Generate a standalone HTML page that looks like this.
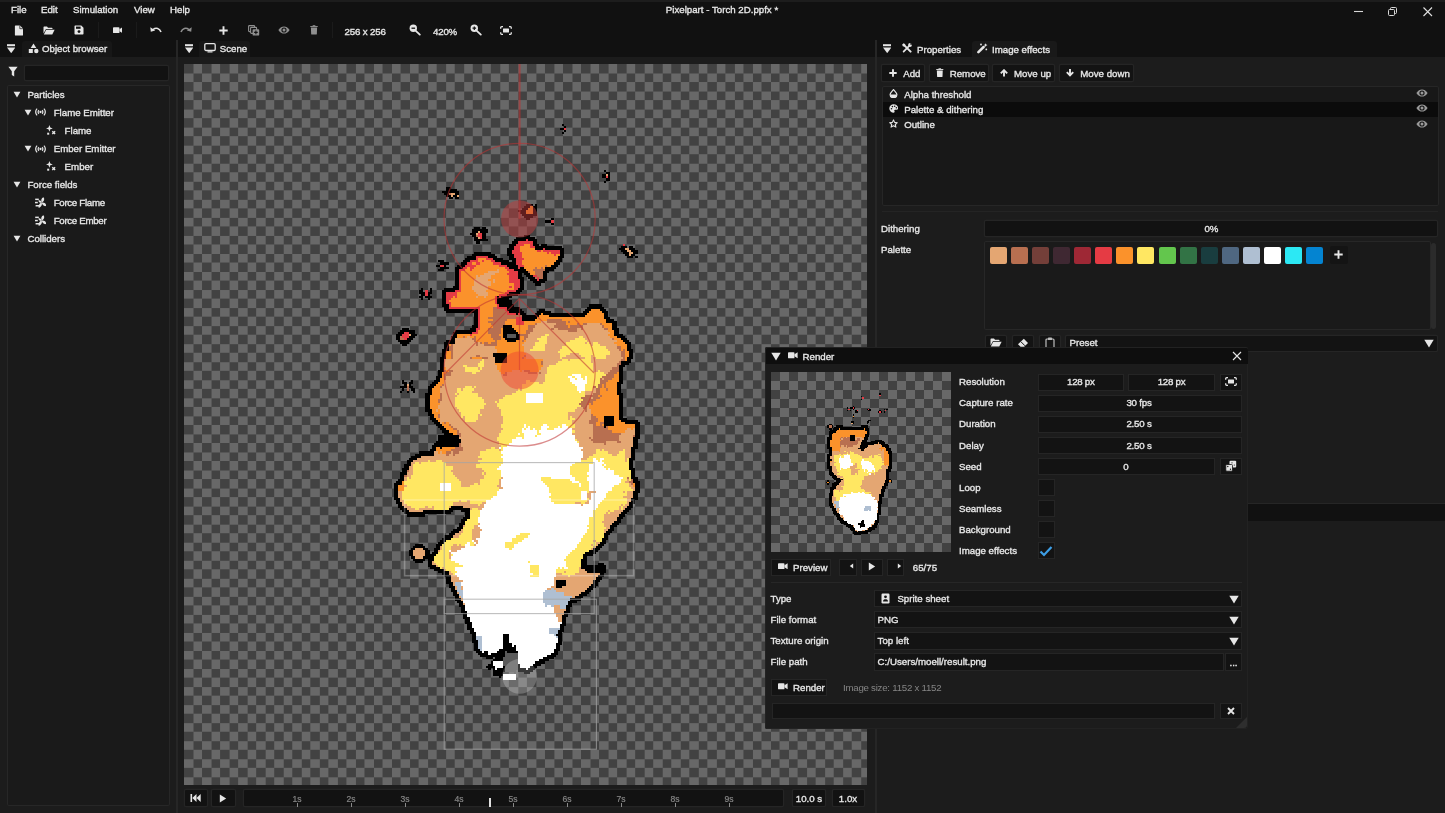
<!DOCTYPE html><html lang="en"><head><meta charset="utf-8"><title>Pixelpart - Torch 2D.ppfx *</title><style>
*{margin:0;padding:0;box-sizing:border-box}
html,body{width:1445px;height:813px;overflow:hidden;background:#1c1c1c}
body{position:relative;font-family:"Liberation Sans",sans-serif;font-size:9.7px;color:#e6e6e6}
div,span,svg{position:absolute}
.t{white-space:nowrap;line-height:14px;height:14px;-webkit-text-stroke:0.35px currentColor;letter-spacing:0}
.chk{background-color:#424242;background-image:conic-gradient(#686868 25%,transparent 0 50%,#686868 0 75%,transparent 0);background-size:18.06px 18.06px}
</style></head><body><div id="app" style="left:0;top:0;width:1445px;height:813px;will-change:transform">
<div style="left:0px;top:0px;width:1445px;height:57px;background:#111111;"></div>
<div style="left:0px;top:0px;width:1445px;height:2px;background:#1d1d1d;"></div>
<span class="t" style="top:2.5999999999999996px;left:11px;">File</span>
<span class="t" style="top:2.5999999999999996px;left:41px;">Edit</span>
<span class="t" style="top:2.5999999999999996px;left:73px;">Simulation</span>
<span class="t" style="top:2.5999999999999996px;left:134px;">View</span>
<span class="t" style="top:2.5999999999999996px;left:170px;">Help</span>
<span class="t" style="top:2.5999999999999996px;left:572px;width:300px;text-align:center;">Pixelpart - Torch 2D.ppfx *</span>
<svg style="left:1352px;top:6px" width="14" height="12" viewBox="0 0 14 12"><path d="M2 5.5H11" stroke="#d8d8d8" stroke-width="1.1" fill="none"/></svg><svg style="left:1386px;top:5px" width="14" height="14" viewBox="0 0 14 14"><rect x="2.5" y="4.5" width="6" height="6" rx="1" stroke="#d8d8d8" fill="none"/><path d="M4.5 4.5V3.5a1 1 0 0 1 1-1H9.5a1 1 0 0 1 1 1V7.5a1 1 0 0 1-1 1H8.5" stroke="#d8d8d8" fill="none"/></svg><svg style="left:1421px;top:5px" width="14" height="14" viewBox="0 0 14 14"><path d="M2.5 2.5L11 11M11 2.5L2.5 11" stroke="#e0e0e0" stroke-width="1.1" fill="none"/></svg>
<svg style="left:14px;top:25px" width="10" height="11" viewBox="0 0 10 11"><path d="M1.5 0.5H6L9 3.5V10a.6.6 0 0 1-.6.6H1.5a.6.6 0 0 1-.6-.6V1.1a.6.6 0 0 1 .6-.6Z" fill="#e6e6e6"/><path d="M5.8 0.5V3.7H9" fill="none" stroke="#111" stroke-width=".7"/></svg><svg style="left:43px;top:26px" width="12" height="9" viewBox="0 0 12 9"><path d="M0.5 7.5V1.2a.7.7 0 0 1 .7-.7H4l1 1.2H8.8a.7.7 0 0 1 .7.7V3H3L.5 7.5Z" fill="#e6e6e6"/><path d="M3.2 3.8H11.6L9.3 8.5H.8Z" fill="#e6e6e6"/></svg><svg style="left:74px;top:25px" width="10" height="10" viewBox="0 0 10 10"><path d="M1.2 .5H7.3L9.5 2.7V8.8a.7.7 0 0 1-.7.7H1.2a.7.7 0 0 1-.7-.7V1.2a.7.7 0 0 1 .7-.7Z" fill="#e6e6e6"/><rect x="2" y="1.6" width="4.6" height="2.2" fill="#111"/><circle cx="5" cy="6.6" r="1.4" fill="#111"/></svg><div style="left:98px;top:22px;width:1px;height:16px;background:#1b1b1b"></div><svg style="left:112.8px;top:26.8px" width="9.6" height="6.4" viewBox="0 0 11 7"><rect x="0" y="0" width="7.400" height="7" rx="1" fill="#e6e6e6"/><path d="M7.400 2.300L11 0V7L7.400 4.700Z" fill="#e6e6e6"/></svg><div style="left:136px;top:22px;width:1px;height:16px;background:#1b1b1b"></div><svg style="left:150px;top:26px" width="12" height="8" viewBox="0 0 12 8"><g ><path d="M3 3.6C6 1.2 9.6 2.2 11 6" fill="none" stroke="#e6e6e6" stroke-width="1.6"/><path d="M.3 1.2L.8 5.8L5.2 4.6Z" fill="#e6e6e6"/></g></svg><svg style="left:180px;top:26px" width="12" height="8" viewBox="0 0 12 8"><g transform="translate(12,0) scale(-1,1)"><path d="M3 3.6C6 1.2 9.6 2.2 11 6" fill="none" stroke="#8f8f8f" stroke-width="1.6"/><path d="M.3 1.2L.8 5.8L5.2 4.6Z" fill="#8f8f8f"/></g></svg><svg style="left:219px;top:26px" width="9" height="9" viewBox="0 0 9 9"><path d="M4.5 .3V8.7M.3 4.5H8.7" stroke="#e6e6e6" stroke-width="1.9" fill="none"/></svg><svg style="left:248px;top:25px" width="12" height="11" viewBox="0 0 12 11"><rect x=".6" y=".6" width="6" height="6" rx=".8" fill="none" stroke="#8f8f8f" stroke-width="1.1"/><rect x="2.6" y="2.4" width="6" height="6" rx=".8" fill="#111" stroke="#8f8f8f" stroke-width="1.1"/><rect x="4.6" y="4.2" width="6.6" height="6.4" rx=".9" fill="#8f8f8f"/><path d="M7.9 5.6V9.2M6.1 7.4H9.7" stroke="#111" stroke-width="1.1"/></svg><svg style="left:278px;top:26px" width="12" height="8" viewBox="0 0 12 8"><path d="M.4 4C2 1.3 4 .4 6 .4S10 1.3 11.6 4C10 6.7 8 7.6 6 7.6S2 6.7 .4 4Z" fill="#8f8f8f"/><circle cx="6" cy="4" r="2.6" fill="#151515"/><circle cx="6" cy="4" r="1.5" fill="#8f8f8f"/></svg><svg style="left:310px;top:25px" width="8" height="9.8" viewBox="0 0 9 11"><path d="M.3 1.100H8.700V2.200H.3Z" fill="#8f8f8f"/><path d="M3 .2H6V1.300H3Z" fill="#8f8f8f"/><path d="M1 2.800H8L7.700 10a.7.7 0 0 1-.7.600H2a.7.7 0 0 1-.7-.600Z" fill="#8f8f8f"/></svg><div style="left:332px;top:22px;width:1px;height:16px;background:#1b1b1b"></div><svg style="left:409px;top:24px" width="12" height="12" viewBox="0 0 12 12"><circle cx="4.300" cy="4.200" r="3.700" fill="#e6e6e6"/><path d="M2.500 4.200H6.100" stroke="#111" stroke-width="1.300"/><path d="M6.800 6.800L10.800 10.600" stroke="#e6e6e6" stroke-width="1.800" stroke-linecap="round"/></svg><svg style="left:470px;top:24px" width="12" height="12" viewBox="0 0 12 12"><circle cx="4.300" cy="4.200" r="3.700" fill="#e6e6e6"/><path d="M2.500 4.200H6.100M4.300 2.400V6" stroke="#111" stroke-width="1.200"/><path d="M6.800 6.800L10.800 10.600" stroke="#e6e6e6" stroke-width="1.800" stroke-linecap="round"/></svg><svg style="left:500px;top:26px" width="12" height="9" viewBox="0 0 12 9"><path d="M.7 2.8V1.7a1 1 0 0 1 1-1H3M9 .7h1.3a1 1 0 0 1 1 1V2.8M11.3 6.2V7.3a1 1 0 0 1-1 1H9M3 8.3H1.7a1 1 0 0 1-1-1V6.2" fill="none" stroke="#e6e6e6" stroke-width="1.3"/><rect x="3" y="2.6" width="6" height="3.8" rx=".5" fill="#e6e6e6"/></svg>
<span class="t" style="top:24.6px;left:344.5px;letter-spacing:-.15px;">256 x 256</span>
<span class="t" style="top:24.6px;left:433px;letter-spacing:-.2px;">420%</span>
<div style="left:22px;top:41px;width:90px;height:16px;background:#171717;border-radius:3px 3px 0 0;"></div>
<svg style="left:7px;top:43.8px" width="8.4" height="9.4" viewBox="0 0 8.4 9.4"><rect x="0" y=".2" width="8.4" height="2" fill="#e6e6e6"/><path d="M0 3.600H8.400L4.200 9.200Z" fill="#e6e6e6"/></svg>
<svg style="left:28px;top:43px" width="11" height="11" viewBox="0 0 11 11"><path d="M5.5 .5L8.3 5H2.7Z" fill="#e6e6e6"/><rect x=".8" y="6" width="4" height="4" fill="#e6e6e6"/><circle cx="8.3" cy="8" r="2.2" fill="#e6e6e6"/></svg>
<span class="t" style="top:42.4px;left:42px;">Object browser</span>
<div style="left:198.5px;top:41px;width:51.5px;height:16px;background:#171717;border-radius:3px 3px 0 0;"></div>
<svg style="left:184.9px;top:43.8px" width="8.4" height="9.4" viewBox="0 0 8.4 9.4"><rect x="0" y=".2" width="8.4" height="2" fill="#e6e6e6"/><path d="M0 3.600H8.400L4.200 9.200Z" fill="#e6e6e6"/></svg>
<svg style="left:204px;top:43.2px" width="12" height="10" viewBox="0 0 12 10"><rect x=".8" y=".7" width="10.4" height="6.8" rx="1.2" fill="none" stroke="#e6e6e6" stroke-width="1.3"/><rect x="3.5" y="8.3" width="5" height="1.2" fill="#e6e6e6"/></svg>
<span class="t" style="top:42.3px;left:219.7px;">Scene</span>
<div style="left:972px;top:41px;width:84.5px;height:16px;background:#191919;border-radius:3px 3px 0 0;"></div>
<svg style="left:882.5px;top:43.8px" width="8.4" height="9.4" viewBox="0 0 8.4 9.4"><rect x="0" y=".2" width="8.4" height="2" fill="#e6e6e6"/><path d="M0 3.600H8.400L4.200 9.200Z" fill="#e6e6e6"/></svg>
<svg style="left:902.3px;top:43.3px" width="10" height="10" viewBox="0 0 10 10"><path d="M1.600 1.600L8.600 8.600" stroke="#e6e6e6" stroke-width="2" stroke-linecap="round"/><path d="M8.200 1.800L1.600 8.600" stroke="#e6e6e6" stroke-width="1.700" stroke-linecap="round"/><circle cx="8" cy="2" r="1.900" fill="#e6e6e6"/><circle cx="9.100" cy=".9" r=".9" fill="#111"/><circle cx="1.900" cy="1.900" r="1.500" fill="#e6e6e6"/></svg>
<span class="t" style="top:42.6px;left:917px;">Properties</span>
<svg style="left:977.3px;top:43.3px" width="10.5" height="10.5" viewBox="0 0 10.5 10.5"><path d="M1.400 9.200L6.600 4" stroke="#e6e6e6" stroke-width="2.500" stroke-linecap="round"/><path d="M8.600 .2l.6 1.300 1.300.6-1.300.6-.6 1.300-.6-1.300-1.300-.6 1.300-.6Z" fill="#e6e6e6"/><circle cx="4" cy="1.500" r=".9" fill="#e6e6e6"/><circle cx="9.300" cy="6.400" r=".9" fill="#e6e6e6"/></svg>
<span class="t" style="top:42.6px;left:992px;">Image effects</span>
<div style="left:176px;top:40px;width:2px;height:773px;background:#262626;"></div>
<div style="left:875px;top:40px;width:2px;height:773px;background:#262626;"></div>
<svg style="left:8px;top:66px" width="10" height="12" viewBox="0 0 10 12"><path d="M.4 .8H9.6L6.2 5.2V10.6L3.8 9V5.2Z" fill="#e6e6e6"/></svg>
<div style="left:25px;top:65.5px;width:143px;height:14.8px;background:#121212;box-shadow:0 0 0 1.2px #252525;border-radius:1px;"></div>
<div style="left:7px;top:85px;width:163px;height:721px;background:#1a1a1a;box-shadow:inset 0 0 0 1px #272727;border-radius:2px;"></div>
<svg style="left:12.7px;top:90.7px" width="8" height="8" viewBox="0 0 8 8"><path d="M.6 .8H7.4L4 6.6Z" fill="#e6e6e6"/></svg>
<span class="t" style="top:87.7px;left:27.4px;">Particles</span>
<svg style="left:23.7px;top:108.77000000000001px" width="8" height="8" viewBox="0 0 8 8"><path d="M.6 .8H7.4L4 6.6Z" fill="#e6e6e6"/></svg>
<svg style="left:35.2px;top:108.37px" width="11" height="8" viewBox="0 0 11 8"><circle cx="5.500" cy="4" r="1.150" fill="#e6e6e6"/><path d="M3.900 2.200a2.500 2.500 0 0 0 0 3.600M7.100 2.200a2.500 2.500 0 0 1 0 3.600" fill="none" stroke="#e6e6e6" stroke-width="1.250"/><path d="M2.100 .6a4.800 4.800 0 0 0 0 6.800M8.900 .6a4.800 4.800 0 0 1 0 6.800" fill="none" stroke="#e6e6e6" stroke-width="1.250"/></svg>
<span class="t" style="top:105.77000000000001px;left:53.7px;">Flame Emitter</span>
<svg style="left:46.2px;top:125.34px" width="10" height="10.5" viewBox="0 0 10 10.5"><path d="M3.400 0l.9 2.500 2.500.9-2.500.9-.9 2.500-.9-2.500L0 3.400l2.500-.9Z" fill="#e6e6e6"/><path d="M6.300 6.300l2.800 2.800M9.100 6.300l-2.800 2.800" stroke="#e6e6e6" stroke-width="1.400"/><rect x="1.200" y="7.700" width="2" height="2" fill="#e6e6e6"/></svg>
<span class="t" style="top:123.84px;left:64.6px;">Flame</span>
<svg style="left:23.7px;top:144.91px" width="8" height="8" viewBox="0 0 8 8"><path d="M.6 .8H7.4L4 6.6Z" fill="#e6e6e6"/></svg>
<svg style="left:35.2px;top:144.51px" width="11" height="8" viewBox="0 0 11 8"><circle cx="5.500" cy="4" r="1.150" fill="#e6e6e6"/><path d="M3.900 2.200a2.500 2.500 0 0 0 0 3.600M7.100 2.200a2.500 2.500 0 0 1 0 3.600" fill="none" stroke="#e6e6e6" stroke-width="1.250"/><path d="M2.100 .6a4.800 4.800 0 0 0 0 6.800M8.900 .6a4.800 4.800 0 0 1 0 6.800" fill="none" stroke="#e6e6e6" stroke-width="1.250"/></svg>
<span class="t" style="top:141.91px;left:53.7px;">Ember Emitter</span>
<svg style="left:46.2px;top:161.48px" width="10" height="10.5" viewBox="0 0 10 10.5"><path d="M3.400 0l.9 2.500 2.500.9-2.500.9-.9 2.500-.9-2.500L0 3.400l2.500-.9Z" fill="#e6e6e6"/><path d="M6.300 6.300l2.800 2.800M9.100 6.300l-2.800 2.800" stroke="#e6e6e6" stroke-width="1.400"/><rect x="1.200" y="7.700" width="2" height="2" fill="#e6e6e6"/></svg>
<span class="t" style="top:159.98px;left:64.6px;">Ember</span>
<svg style="left:12.7px;top:181.04999999999998px" width="8" height="8" viewBox="0 0 8 8"><path d="M.6 .8H7.4L4 6.6Z" fill="#e6e6e6"/></svg>
<span class="t" style="top:178.04999999999998px;left:27.4px;">Force fields</span>
<svg style="left:34.8px;top:197.31999999999996px" width="11.5" height="11.5" viewBox="0 0 11.5 11.5"><g fill="#e6e6e6"><rect x=".2" y="1.600" width="3.600" height="1.500"/><rect x="0" y="4.800" width="2.800" height="1.500"/><rect x=".6" y="8" width="3.600" height="1.500"/><path d="M6.800 5.600C5.600 3.400 6.200 1 8.600 .2 10 2 9 4.400 6.800 5.600Z"/><path d="M6.800 5.600C9.200 5.200 11.200 6.600 11.200 9 9 9.800 7.200 8 6.800 5.600Z"/><path d="M6.800 5.600C7.400 8 6.200 10.400 3.800 10.900 2.800 8.800 4.400 6.400 6.800 5.600Z"/><path d="M6.800 5.600C5.200 6 3.600 5.200 3.400 3.400 5 2.800 6.400 4 6.800 5.600Z"/></g></svg>
<span class="t" style="top:196.11999999999998px;left:53.7px;letter-spacing:-.3px;">Force Flame</span>
<svg style="left:34.8px;top:215.38999999999996px" width="11.5" height="11.5" viewBox="0 0 11.5 11.5"><g fill="#e6e6e6"><rect x=".2" y="1.600" width="3.600" height="1.500"/><rect x="0" y="4.800" width="2.800" height="1.500"/><rect x=".6" y="8" width="3.600" height="1.500"/><path d="M6.800 5.600C5.600 3.400 6.200 1 8.600 .2 10 2 9 4.400 6.800 5.600Z"/><path d="M6.800 5.600C9.200 5.200 11.200 6.600 11.200 9 9 9.800 7.200 8 6.800 5.600Z"/><path d="M6.800 5.600C7.400 8 6.200 10.400 3.800 10.900 2.800 8.800 4.400 6.400 6.800 5.600Z"/><path d="M6.800 5.600C5.200 6 3.600 5.200 3.400 3.400 5 2.800 6.400 4 6.800 5.600Z"/></g></svg>
<span class="t" style="top:214.18999999999997px;left:53.7px;letter-spacing:-.3px;">Force Ember</span>
<svg style="left:12.7px;top:235.25999999999996px" width="8" height="8" viewBox="0 0 8 8"><path d="M.6 .8H7.4L4 6.6Z" fill="#e6e6e6"/></svg>
<span class="t" style="top:232.25999999999996px;left:27.4px;">Colliders</span>
<div class="chk" style="left:184px;top:64px;width:683px;height:721px;overflow:hidden"><svg style="left:0;top:0" width="683" height="721" viewBox="0 0 683 721" shape-rendering="crispEdges"><path fill="#000000" d="M377.9 59.8H380.0V61.9H377.9ZM380.0 61.9H382.1V64.0H380.0ZM375.8 64.0H380.0V66.1H375.8ZM380.0 66.1H382.1V68.2H380.0ZM377.9 68.2H380.0V70.3H377.9ZM419.9 106.0H422.0V108.1H419.9ZM422.0 108.1H426.2V110.2H422.0ZM417.8 110.2H422.0V112.3H417.8ZM424.1 110.2H426.2V112.3H424.1ZM417.8 112.3H422.0V114.4H417.8ZM424.1 112.3H426.2V114.4H424.1ZM422.0 114.4H426.2V116.5H422.0ZM419.9 116.5H422.0V118.6H419.9ZM262.4 122.8H266.6V124.9H262.4ZM262.4 124.9H272.9V127.0H262.4ZM258.2 127.0H275.0V129.1H258.2ZM260.3 129.1H264.5V131.2H260.3ZM270.8 129.1H275.0V131.2H270.8ZM262.4 131.2H266.6V133.3H262.4ZM268.7 131.2H272.9V133.3H268.7ZM264.5 133.3H268.7V135.4H264.5ZM270.8 133.3H275.0V135.4H270.8ZM342.2 139.6H348.5V141.7H342.2ZM350.6 139.6H352.7V141.7H350.6ZM340.1 141.7H346.4V143.8H340.1ZM348.5 141.7H352.7V143.8H348.5ZM338.0 143.8H344.3V145.9H338.0ZM348.5 143.8H352.7V145.9H348.5ZM333.8 145.9H342.2V148.0H333.8ZM348.5 145.9H352.7V148.0H348.5ZM335.9 148.0H342.2V150.1H335.9ZM348.5 148.0H352.7V150.1H348.5ZM338.0 150.1H352.7V152.2H338.0ZM340.1 152.2H348.5V154.3H340.1ZM342.2 154.3H346.4V156.4H342.2ZM367.4 154.3H369.5V156.4H367.4ZM361.1 156.4H367.4V158.5H361.1ZM367.4 158.5H369.5V160.6H367.4ZM289.7 162.7H296.0V164.8H289.7ZM298.1 162.7H302.3V164.8H298.1ZM287.6 164.8H304.4V166.9H287.6ZM287.6 166.9H293.9V169.0H287.6ZM296.0 166.9H304.4V169.0H296.0ZM285.5 169.0H291.8V171.1H285.5ZM298.1 169.0H302.3V171.1H298.1ZM287.6 171.1H291.8V173.2H287.6ZM298.1 171.1H302.3V173.2H298.1ZM340.1 171.1H346.4V173.2H340.1ZM289.7 173.2H293.9V175.3H289.7ZM298.1 173.2H302.3V175.3H298.1ZM331.7 173.2H350.6V175.3H331.7ZM289.7 175.3H304.4V177.4H289.7ZM329.6 175.3H342.2V177.4H329.6ZM344.3 175.3H352.7V177.4H344.3ZM291.8 177.4H296.0V179.5H291.8ZM327.5 177.4H333.8V179.5H327.5ZM348.5 177.4H352.7V179.5H348.5ZM325.4 179.5H331.7V181.6H325.4ZM348.5 179.5H354.8V181.6H348.5ZM356.9 179.5H363.2V181.6H356.9ZM325.4 181.6H329.6V183.7H325.4ZM350.6 181.6H377.9V183.7H350.6ZM436.7 181.6H443.0V183.7H436.7ZM445.1 181.6H449.3V183.7H445.1ZM323.3 183.7H329.6V185.8H323.3ZM350.6 183.7H359.0V185.8H350.6ZM361.1 183.7H380.0V185.8H361.1ZM434.6 183.7H440.9V185.8H434.6ZM445.1 183.7H451.4V185.8H445.1ZM323.3 185.8H327.5V187.9H323.3ZM375.8 185.8H380.0V187.9H375.8ZM436.7 185.8H443.0V187.9H436.7ZM447.2 185.8H453.5V187.9H447.2ZM289.7 187.9H306.5V190.0H289.7ZM323.3 187.9H327.5V190.0H323.3ZM375.8 187.9H380.0V190.0H375.8ZM438.8 187.9H445.1V190.0H438.8ZM449.3 187.9H453.5V190.0H449.3ZM287.6 190.0H310.7V192.1H287.6ZM323.3 190.0H329.6V192.1H323.3ZM375.8 190.0H380.0V192.1H375.8ZM440.9 190.0H445.1V192.1H440.9ZM447.2 190.0H451.4V192.1H447.2ZM283.4 192.1H291.8V194.2H283.4ZM304.4 192.1H312.8V194.2H304.4ZM325.4 192.1H329.6V194.2H325.4ZM373.7 192.1H380.0V194.2H373.7ZM443.0 192.1H449.3V194.2H443.0ZM451.4 192.1H453.5V194.2H451.4ZM281.3 194.2H291.8V196.3H281.3ZM308.6 194.2H319.1V196.3H308.6ZM325.4 194.2H331.7V196.3H325.4ZM373.7 194.2H377.9V196.3H373.7ZM254.0 196.3H260.3V198.4H254.0ZM279.2 196.3H285.5V198.4H279.2ZM310.7 196.3H325.4V198.4H310.7ZM327.5 196.3H331.7V198.4H327.5ZM371.6 196.3H377.9V198.4H371.6ZM256.1 198.4H264.5V200.5H256.1ZM277.1 198.4H283.4V200.5H277.1ZM317.0 198.4H331.7V200.5H317.0ZM369.5 198.4H375.8V200.5H369.5ZM251.9 200.5H256.1V202.6H251.9ZM260.3 200.5H262.4V202.6H260.3ZM272.9 200.5H281.3V202.6H272.9ZM323.3 200.5H333.8V202.6H323.3ZM367.4 200.5H373.7V202.6H367.4ZM256.1 202.6H264.5V204.7H256.1ZM270.8 202.6H279.2V204.7H270.8ZM325.4 202.6H333.8V204.7H325.4ZM335.9 202.6H340.1V204.7H335.9ZM361.1 202.6H371.6V204.7H361.1ZM254.0 204.7H260.3V206.8H254.0ZM270.8 204.7H275.0V206.8H270.8ZM329.6 204.7H342.2V206.8H329.6ZM361.1 204.7H369.5V206.8H361.1ZM270.8 206.8H275.0V208.9H270.8ZM333.8 206.8H344.3V208.9H333.8ZM359.0 206.8H365.3V208.9H359.0ZM270.8 208.9H275.0V211.0H270.8ZM333.8 208.9H338.0V211.0H333.8ZM340.1 208.9H346.4V211.0H340.1ZM359.0 208.9H363.2V211.0H359.0ZM270.8 211.0H275.0V213.1H270.8ZM333.8 211.0H338.0V213.1H333.8ZM342.2 211.0H348.5V213.1H342.2ZM359.0 211.0H363.2V213.1H359.0ZM270.8 213.1H275.0V215.2H270.8ZM333.8 213.1H340.1V215.2H333.8ZM344.3 213.1H350.6V215.2H344.3ZM359.0 213.1H363.2V215.2H359.0ZM270.8 215.2H275.0V217.3H270.8ZM335.9 215.2H340.1V217.3H335.9ZM346.4 215.2H352.7V217.3H346.4ZM354.8 215.2H363.2V217.3H354.8ZM270.8 217.3H275.0V219.4H270.8ZM335.9 217.3H340.1V219.4H335.9ZM348.5 217.3H361.1V219.4H348.5ZM270.8 219.4H275.0V221.5H270.8ZM335.9 219.4H340.1V221.5H335.9ZM350.6 219.4H356.9V221.5H350.6ZM268.7 221.5H275.0V223.6H268.7ZM335.9 221.5H340.1V223.6H335.9ZM237.2 223.6H239.3V225.7H237.2ZM245.6 223.6H247.7V225.7H245.6ZM260.3 223.6H275.0V225.7H260.3ZM333.8 223.6H340.1V225.7H333.8ZM235.1 225.7H239.3V227.8H235.1ZM245.6 225.7H247.7V227.8H245.6ZM258.2 225.7H270.8V227.8H258.2ZM331.7 225.7H338.0V227.8H331.7ZM235.1 227.8H241.4V229.9H235.1ZM243.5 227.8H247.7V229.9H243.5ZM258.2 227.8H262.4V229.9H258.2ZM325.4 227.8H335.9V229.9H325.4ZM237.2 229.9H241.4V232.0H237.2ZM243.5 229.9H245.6V232.0H243.5ZM258.2 229.9H262.4V232.0H258.2ZM323.3 229.9H333.8V232.0H323.3ZM235.1 232.0H239.3V234.1H235.1ZM241.4 232.0H247.7V234.1H241.4ZM258.2 232.0H262.4V234.1H258.2ZM312.8 232.0H314.9V234.1H312.8ZM317.0 232.0H327.5V234.1H317.0ZM237.2 234.1H239.3V236.2H237.2ZM243.5 234.1H245.6V236.2H243.5ZM258.2 234.1H262.4V236.2H258.2ZM312.8 234.1H325.4V236.2H312.8ZM258.2 236.2H262.4V238.3H258.2ZM312.8 236.2H327.5V238.3H312.8ZM258.2 238.3H262.4V240.4H258.2ZM312.8 238.3H327.5V240.4H312.8ZM258.2 240.4H264.5V242.5H258.2ZM314.9 240.4H329.6V242.5H314.9ZM405.2 240.4H417.8V242.5H405.2ZM260.3 242.5H264.5V244.6H260.3ZM323.3 242.5H335.9V244.6H323.3ZM403.1 242.5H419.9V244.6H403.1ZM260.3 244.6H293.9V246.7H260.3ZM323.3 244.6H338.0V246.7H323.3ZM354.8 244.6H361.1V246.7H354.8ZM401.0 244.6H407.3V246.7H401.0ZM415.7 244.6H422.0V246.7H415.7ZM262.4 246.7H293.9V248.8H262.4ZM325.4 246.7H340.1V248.8H325.4ZM352.7 246.7H367.4V248.8H352.7ZM398.9 246.7H405.2V248.8H398.9ZM417.8 246.7H424.1V248.8H417.8ZM289.7 248.8H293.9V250.9H289.7ZM331.7 248.8H333.8V250.9H331.7ZM335.9 248.8H342.2V250.9H335.9ZM350.6 248.8H356.9V250.9H350.6ZM359.0 248.8H403.1V250.9H359.0ZM419.9 248.8H424.1V250.9H419.9ZM289.7 250.9H293.9V253.0H289.7ZM338.0 250.9H354.8V253.0H338.0ZM365.3 250.9H401.0V253.0H365.3ZM419.9 250.9H424.1V253.0H419.9ZM289.7 253.0H293.9V255.1H289.7ZM338.0 253.0H352.7V255.1H338.0ZM419.9 253.0H426.2V255.1H419.9ZM289.7 255.1H293.9V257.2H289.7ZM338.0 255.1H350.6V257.2H338.0ZM422.0 255.1H430.4V257.2H422.0ZM289.7 257.2H293.9V259.3H289.7ZM422.0 257.2H432.5V259.3H422.0ZM289.7 259.3H293.9V261.4H289.7ZM428.3 259.3H432.5V261.4H428.3ZM287.6 261.4H293.9V263.5H287.6ZM319.1 261.4H327.5V263.5H319.1ZM428.3 261.4H432.5V263.5H428.3ZM218.3 263.5H224.6V265.6H218.3ZM285.5 263.5H291.8V265.6H285.5ZM319.1 263.5H329.6V265.6H319.1ZM428.3 263.5H434.6V265.6H428.3ZM216.2 265.6H230.9V267.7H216.2ZM270.8 265.6H291.8V267.7H270.8ZM319.1 265.6H331.7V267.7H319.1ZM430.4 265.6H434.6V267.7H430.4ZM214.1 267.7H220.4V269.8H214.1ZM224.6 267.7H230.9V269.8H224.6ZM268.7 267.7H287.6V269.8H268.7ZM319.1 267.7H333.8V269.8H319.1ZM430.4 267.7H434.6V269.8H430.4ZM212.0 269.8H218.3V271.9H212.0ZM226.7 269.8H233.0V271.9H226.7ZM268.7 269.8H272.9V271.9H268.7ZM319.1 269.8H323.3V271.9H319.1ZM331.7 269.8H335.9V271.9H331.7ZM430.4 269.8H438.8V271.9H430.4ZM212.0 271.9H216.2V274.0H212.0ZM224.6 271.9H230.9V274.0H224.6ZM266.6 271.9H272.9V274.0H266.6ZM319.1 271.9H323.3V274.0H319.1ZM331.7 271.9H335.9V274.0H331.7ZM432.5 271.9H440.9V274.0H432.5ZM212.0 274.0H216.2V276.1H212.0ZM222.5 274.0H228.8V276.1H222.5ZM266.6 274.0H270.8V276.1H266.6ZM321.2 274.0H335.9V276.1H321.2ZM436.7 274.0H443.0V276.1H436.7ZM214.1 276.1H226.7V278.2H214.1ZM262.4 276.1H270.8V278.2H262.4ZM323.3 276.1H331.7V278.2H323.3ZM438.8 276.1H445.1V278.2H438.8ZM216.2 278.2H224.6V280.3H216.2ZM260.3 278.2H270.8V280.3H260.3ZM440.9 278.2H447.2V280.3H440.9ZM218.3 280.3H222.5V282.4H218.3ZM260.3 280.3H264.5V282.4H260.3ZM443.0 280.3H447.2V282.4H443.0ZM260.3 282.4H264.5V284.5H260.3ZM443.0 282.4H447.2V284.5H443.0ZM258.2 284.5H264.5V286.6H258.2ZM443.0 284.5H449.3V286.6H443.0ZM258.2 286.6H262.4V288.7H258.2ZM445.1 286.6H449.3V288.7H445.1ZM258.2 288.7H262.4V290.8H258.2ZM308.6 288.7H323.3V290.8H308.6ZM445.1 288.7H449.3V290.8H445.1ZM258.2 290.8H262.4V292.9H258.2ZM308.6 290.8H323.3V292.9H308.6ZM445.1 290.8H449.3V292.9H445.1ZM256.1 292.9H262.4V295.0H256.1ZM310.7 292.9H323.3V295.0H310.7ZM443.0 292.9H449.3V295.0H443.0ZM256.1 295.0H260.3V297.1H256.1ZM310.7 295.0H323.3V297.1H310.7ZM443.0 295.0H447.2V297.1H443.0ZM256.1 297.1H260.3V299.2H256.1ZM310.7 297.1H323.3V299.2H310.7ZM436.7 297.1H447.2V299.2H436.7ZM256.1 299.2H260.3V301.3H256.1ZM436.7 299.2H445.1V301.3H436.7ZM256.1 301.3H260.3V303.4H256.1ZM434.6 301.3H440.9V303.4H434.6ZM256.1 303.4H260.3V305.5H256.1ZM434.6 303.4H438.8V305.5H434.6ZM254.0 305.5H260.3V307.6H254.0ZM434.6 305.5H438.8V307.6H434.6ZM254.0 307.6H258.2V309.7H254.0ZM434.6 307.6H438.8V309.7H434.6ZM254.0 309.7H258.2V311.8H254.0ZM434.6 309.7H438.8V311.8H434.6ZM251.9 311.8H258.2V313.9H251.9ZM434.6 311.8H438.8V313.9H434.6ZM251.9 313.9H256.1V316.0H251.9ZM434.6 313.9H438.8V316.0H434.6ZM218.3 316.0H220.4V318.1H218.3ZM226.7 316.0H228.8V318.1H226.7ZM249.8 316.0H256.1V318.1H249.8ZM434.6 316.0H438.8V318.1H434.6ZM218.3 318.1H222.5V320.2H218.3ZM224.6 318.1H228.8V320.2H224.6ZM247.7 318.1H254.0V320.2H247.7ZM432.5 318.1H438.8V320.2H432.5ZM220.4 320.2H222.5V322.3H220.4ZM224.6 320.2H226.7V322.3H224.6ZM245.6 320.2H251.9V322.3H245.6ZM432.5 320.2H436.7V322.3H432.5ZM216.2 322.3H222.5V324.4H216.2ZM224.6 322.3H228.8V324.4H224.6ZM243.5 322.3H249.8V324.4H243.5ZM432.5 322.3H436.7V324.4H432.5ZM218.3 324.4H220.4V326.5H218.3ZM226.7 324.4H230.9V326.5H226.7ZM243.5 324.4H247.7V326.5H243.5ZM432.5 324.4H436.7V326.5H432.5ZM216.2 326.5H218.3V328.6H216.2ZM222.5 326.5H224.6V328.6H222.5ZM228.8 326.5H230.9V328.6H228.8ZM243.5 326.5H247.7V328.6H243.5ZM432.5 326.5H436.7V328.6H432.5ZM241.4 328.6H247.7V330.7H241.4ZM432.5 328.6H438.8V330.7H432.5ZM241.4 330.7H245.6V332.8H241.4ZM434.6 330.7H438.8V332.8H434.6ZM241.4 332.8H245.6V334.9H241.4ZM434.6 332.8H438.8V334.9H434.6ZM241.4 334.9H245.6V337.0H241.4ZM434.6 334.9H438.8V337.0H434.6ZM241.4 337.0H245.6V339.1H241.4ZM434.6 337.0H438.8V339.1H434.6ZM241.4 339.1H245.6V341.2H241.4ZM434.6 339.1H438.8V341.2H434.6ZM241.4 341.2H245.6V343.3H241.4ZM434.6 341.2H438.8V343.3H434.6ZM241.4 343.3H245.6V345.4H241.4ZM434.6 343.3H438.8V345.4H434.6ZM241.4 345.4H247.7V347.5H241.4ZM434.6 345.4H438.8V347.5H434.6ZM243.5 347.5H247.7V349.6H243.5ZM434.6 347.5H438.8V349.6H434.6ZM243.5 349.6H249.8V351.7H243.5ZM434.6 349.6H438.8V351.7H434.6ZM245.6 351.7H249.8V353.8H245.6ZM419.9 351.7H430.4V353.8H419.9ZM434.6 351.7H438.8V353.8H434.6ZM245.6 353.8H251.9V355.9H245.6ZM419.9 353.8H430.4V355.9H419.9ZM434.6 353.8H443.0V355.9H434.6ZM247.7 355.9H254.0V358.0H247.7ZM419.9 355.9H430.4V358.0H419.9ZM436.7 355.9H453.5V358.0H436.7ZM249.8 358.0H256.1V360.1H249.8ZM419.9 358.0H430.4V360.1H419.9ZM440.9 358.0H455.6V360.1H440.9ZM251.9 360.1H258.2V362.2H251.9ZM419.9 360.1H430.4V362.2H419.9ZM451.4 360.1H455.6V362.2H451.4ZM254.0 362.2H260.3V364.3H254.0ZM419.9 362.2H422.0V364.3H419.9ZM451.4 362.2H455.6V364.3H451.4ZM256.1 364.3H262.4V366.4H256.1ZM451.4 364.3H455.6V366.4H451.4ZM258.2 366.4H264.5V368.5H258.2ZM451.4 366.4H455.6V368.5H451.4ZM260.3 368.5H268.7V370.6H260.3ZM451.4 368.5H455.6V370.6H451.4ZM254.0 370.6H275.0V372.7H254.0ZM451.4 370.6H455.6V372.7H451.4ZM254.0 372.7H275.0V374.8H254.0ZM449.3 372.7H455.6V374.8H449.3ZM254.0 374.8H277.1V376.9H254.0ZM449.3 374.8H453.5V376.9H449.3ZM251.9 376.9H277.1V379.0H251.9ZM449.3 376.9H453.5V379.0H449.3ZM249.8 379.0H275.0V381.1H249.8ZM449.3 379.0H453.5V381.1H449.3ZM247.7 381.1H275.0V383.2H247.7ZM449.3 381.1H453.5V383.2H449.3ZM247.7 383.2H251.9V385.3H247.7ZM256.1 383.2H258.2V385.3H256.1ZM447.2 383.2H453.5V385.3H447.2ZM245.6 385.3H251.9V387.4H245.6ZM447.2 385.3H451.4V387.4H447.2ZM235.1 387.4H249.8V389.5H235.1ZM447.2 387.4H451.4V389.5H447.2ZM230.9 389.5H249.8V391.6H230.9ZM447.2 389.5H451.4V391.6H447.2ZM226.7 391.6H237.2V393.7H226.7ZM447.2 391.6H451.4V393.7H447.2ZM224.6 393.7H233.0V395.8H224.6ZM445.1 393.7H451.4V395.8H445.1ZM222.5 395.8H228.8V397.9H222.5ZM445.1 395.8H449.3V397.9H445.1ZM222.5 397.9H226.7V400.0H222.5ZM445.1 397.9H449.3V400.0H445.1ZM220.4 400.0H226.7V402.1H220.4ZM445.1 400.0H449.3V402.1H445.1ZM220.4 402.1H224.6V404.2H220.4ZM445.1 402.1H449.3V404.2H445.1ZM218.3 404.2H224.6V406.3H218.3ZM445.1 404.2H451.4V406.3H445.1ZM218.3 406.3H222.5V408.4H218.3ZM447.2 406.3H451.4V408.4H447.2ZM216.2 408.4H222.5V410.5H216.2ZM447.2 408.4H451.4V410.5H447.2ZM216.2 410.5H220.4V412.6H216.2ZM447.2 410.5H451.4V412.6H447.2ZM216.2 412.6H220.4V414.7H216.2ZM447.2 412.6H453.5V414.7H447.2ZM214.1 414.7H220.4V416.8H214.1ZM449.3 414.7H453.5V416.8H449.3ZM212.0 416.8H218.3V418.9H212.0ZM449.3 416.8H455.6V418.9H449.3ZM209.9 418.9H218.3V421.0H209.9ZM451.4 418.9H455.6V421.0H451.4ZM209.9 421.0H214.1V423.1H209.9ZM451.4 421.0H455.6V423.1H451.4ZM209.9 423.1H214.1V425.2H209.9ZM451.4 423.1H455.6V425.2H451.4ZM209.9 425.2H214.1V427.3H209.9ZM451.4 425.2H455.6V427.3H451.4ZM209.9 427.3H214.1V429.4H209.9ZM449.3 427.3H455.6V429.4H449.3ZM209.9 429.4H214.1V431.5H209.9ZM449.3 429.4H453.5V431.5H449.3ZM209.9 431.5H214.1V433.6H209.9ZM449.3 431.5H453.5V433.6H449.3ZM209.9 433.6H216.2V435.7H209.9ZM447.2 433.6H453.5V435.7H447.2ZM212.0 435.7H216.2V437.8H212.0ZM447.2 435.7H451.4V437.8H447.2ZM212.0 437.8H218.3V439.9H212.0ZM445.1 437.8H451.4V439.9H445.1ZM214.1 439.9H218.3V442.0H214.1ZM445.1 439.9H449.3V442.0H445.1ZM214.1 442.0H220.4V444.1H214.1ZM266.6 442.0H279.2V444.1H266.6ZM443.0 442.0H449.3V444.1H443.0ZM216.2 444.1H222.5V446.2H216.2ZM264.5 444.1H285.5V446.2H264.5ZM440.9 444.1H447.2V446.2H440.9ZM218.3 446.2H224.6V448.3H218.3ZM239.3 446.2H268.7V448.3H239.3ZM277.1 446.2H285.5V448.3H277.1ZM438.8 446.2H445.1V448.3H438.8ZM220.4 448.3H266.6V450.4H220.4ZM281.3 448.3H285.5V450.4H281.3ZM436.7 448.3H443.0V450.4H436.7ZM222.5 450.4H241.4V452.5H222.5ZM281.3 450.4H285.5V452.5H281.3ZM434.6 450.4H440.9V452.5H434.6ZM279.2 452.5H285.5V454.6H279.2ZM432.5 452.5H438.8V454.6H432.5ZM277.1 454.6H283.4V456.7H277.1ZM432.5 454.6H436.7V456.7H432.5ZM277.1 456.7H281.3V458.8H277.1ZM430.4 456.7H436.7V458.8H430.4ZM275.0 458.8H281.3V460.9H275.0ZM428.3 458.8H434.6V460.9H428.3ZM275.0 460.9H279.2V463.0H275.0ZM426.2 460.9H432.5V463.0H426.2ZM272.9 463.0H279.2V465.1H272.9ZM426.2 463.0H430.4V465.1H426.2ZM268.7 465.1H277.1V467.2H268.7ZM424.1 465.1H430.4V467.2H424.1ZM266.6 467.2H275.0V469.3H266.6ZM422.0 467.2H428.3V469.3H422.0ZM264.5 469.3H270.8V471.4H264.5ZM419.9 469.3H426.2V471.4H419.9ZM260.3 471.4H268.7V473.5H260.3ZM419.9 471.4H424.1V473.5H419.9ZM258.2 473.5H266.6V475.6H258.2ZM417.8 473.5H424.1V475.6H417.8ZM256.1 475.6H262.4V477.7H256.1ZM417.8 475.6H422.0V477.7H417.8ZM254.0 477.7H260.3V479.8H254.0ZM415.7 477.7H422.0V479.8H415.7ZM230.9 479.8H239.3V481.9H230.9ZM251.9 479.8H258.2V481.9H251.9ZM413.6 479.8H419.9V481.9H413.6ZM228.8 481.9H241.4V484.0H228.8ZM251.9 481.9H256.1V484.0H251.9ZM411.5 481.9H417.8V484.0H411.5ZM226.7 484.0H230.9V486.1H226.7ZM239.3 484.0H243.5V486.1H239.3ZM249.8 484.0H256.1V486.1H249.8ZM409.4 484.0H415.7V486.1H409.4ZM224.6 486.1H228.8V488.2H224.6ZM241.4 486.1H245.6V488.2H241.4ZM249.8 486.1H254.0V488.2H249.8ZM405.2 486.1H413.6V488.2H405.2ZM224.6 488.2H228.8V490.3H224.6ZM241.4 488.2H245.6V490.3H241.4ZM247.7 488.2H254.0V490.3H247.7ZM401.0 488.2H411.5V490.3H401.0ZM224.6 490.3H228.8V492.4H224.6ZM241.4 490.3H251.9V492.4H241.4ZM398.9 490.3H409.4V492.4H398.9ZM226.7 492.4H230.9V494.5H226.7ZM239.3 492.4H249.8V494.5H239.3ZM398.9 492.4H403.1V494.5H398.9ZM228.8 494.5H241.4V496.6H228.8ZM243.5 494.5H249.8V496.6H243.5ZM396.8 494.5H403.1V496.6H396.8ZM230.9 496.6H239.3V498.7H230.9ZM243.5 496.6H247.7V498.7H243.5ZM396.8 496.6H403.1V498.7H396.8ZM243.5 498.7H247.7V500.8H243.5ZM396.8 498.7H403.1V500.8H396.8ZM413.6 498.7H419.9V500.8H413.6ZM243.5 500.8H251.9V502.9H243.5ZM396.8 500.8H422.0V502.9H396.8ZM245.6 502.9H256.1V505.0H245.6ZM396.8 502.9H422.0V505.0H396.8ZM249.8 505.0H260.3V507.1H249.8ZM401.0 505.0H422.0V507.1H401.0ZM254.0 507.1H264.5V509.2H254.0ZM403.1 507.1H422.0V509.2H403.1ZM258.2 509.2H264.5V511.3H258.2ZM415.7 509.2H419.9V511.3H415.7ZM260.3 511.3H266.6V513.4H260.3ZM413.6 511.3H419.9V513.4H413.6ZM262.4 513.4H266.6V515.5H262.4ZM411.5 513.4H417.8V515.5H411.5ZM262.4 515.5H266.6V517.6H262.4ZM371.6 515.5H382.1V517.6H371.6ZM409.4 515.5H415.7V517.6H409.4ZM262.4 517.6H268.7V519.7H262.4ZM371.6 517.6H382.1V519.7H371.6ZM409.4 517.6H413.6V519.7H409.4ZM264.5 519.7H268.7V521.8H264.5ZM371.6 519.7H382.1V521.8H371.6ZM407.3 519.7H413.6V521.8H407.3ZM264.5 521.8H270.8V523.9H264.5ZM371.6 521.8H377.9V523.9H371.6ZM405.2 521.8H411.5V523.9H405.2ZM266.6 523.9H270.8V526.0H266.6ZM403.1 523.9H409.4V526.0H403.1ZM266.6 526.0H272.9V528.1H266.6ZM401.0 526.0H407.3V528.1H401.0ZM268.7 528.1H272.9V530.2H268.7ZM396.8 528.1H405.2V530.2H396.8ZM268.7 530.2H275.0V532.3H268.7ZM394.7 530.2H403.1V532.3H394.7ZM270.8 532.3H275.0V534.4H270.8ZM390.5 532.3H398.9V534.4H390.5ZM270.8 534.4H277.1V536.5H270.8ZM386.3 534.4H396.8V536.5H386.3ZM272.9 536.5H279.2V538.6H272.9ZM384.2 536.5H392.6V538.6H384.2ZM275.0 538.6H279.2V540.7H275.0ZM384.2 538.6H388.4V540.7H384.2ZM275.0 540.7H281.3V542.8H275.0ZM382.1 540.7H388.4V542.8H382.1ZM277.1 542.8H281.3V544.9H277.1ZM382.1 542.8H386.3V544.9H382.1ZM277.1 544.9H281.3V547.0H277.1ZM382.1 544.9H386.3V547.0H382.1ZM277.1 547.0H283.4V549.1H277.1ZM380.0 547.0H386.3V549.1H380.0ZM279.2 549.1H283.4V551.2H279.2ZM380.0 549.1H384.2V551.2H380.0ZM279.2 551.2H283.4V553.3H279.2ZM377.9 551.2H384.2V553.3H377.9ZM279.2 553.3H285.5V555.4H279.2ZM377.9 553.3H382.1V555.4H377.9ZM281.3 555.4H285.5V557.5H281.3ZM377.9 555.4H382.1V557.5H377.9ZM281.3 557.5H287.6V559.6H281.3ZM377.9 557.5H382.1V559.6H377.9ZM283.4 559.6H287.6V561.7H283.4ZM375.8 559.6H382.1V561.7H375.8ZM283.4 561.7H287.6V563.8H283.4ZM375.8 561.7H380.0V563.8H375.8ZM283.4 563.8H289.7V565.9H283.4ZM375.8 563.8H380.0V565.9H375.8ZM285.5 565.9H289.7V568.0H285.5ZM373.7 565.9H380.0V568.0H373.7ZM285.5 568.0H291.8V570.1H285.5ZM373.7 568.0H377.9V570.1H373.7ZM287.6 570.1H291.8V572.2H287.6ZM319.1 570.1H325.4V572.2H319.1ZM371.6 570.1H377.9V572.2H371.6ZM287.6 572.2H291.8V574.3H287.6ZM319.1 572.2H325.4V574.3H319.1ZM373.7 572.2H377.9V574.3H373.7ZM287.6 574.3H291.8V576.4H287.6ZM319.1 574.3H325.4V576.4H319.1ZM373.7 574.3H377.9V576.4H373.7ZM287.6 576.4H293.9V578.5H287.6ZM319.1 576.4H325.4V578.5H319.1ZM373.7 576.4H377.9V578.5H373.7ZM289.7 578.5H293.9V580.6H289.7ZM319.1 578.5H327.5V580.6H319.1ZM371.6 578.5H377.9V580.6H371.6ZM289.7 580.6H293.9V582.7H289.7ZM319.1 580.6H327.5V582.7H319.1ZM329.6 580.6H331.7V582.7H329.6ZM371.6 580.6H375.8V582.7H371.6ZM289.7 582.7H293.9V584.8H289.7ZM319.1 582.7H331.7V584.8H319.1ZM371.6 582.7H375.8V584.8H371.6ZM289.7 584.8H296.0V586.9H289.7ZM314.9 584.8H331.7V586.9H314.9ZM369.5 584.8H375.8V586.9H369.5ZM291.8 586.9H298.1V589.0H291.8ZM300.2 586.9H304.4V589.0H300.2ZM312.8 586.9H321.2V589.0H312.8ZM323.3 586.9H333.8V589.0H323.3ZM369.5 586.9H373.7V589.0H369.5ZM293.9 589.0H304.4V591.1H293.9ZM306.5 589.0H321.2V591.1H306.5ZM367.4 589.0H373.7V591.1H367.4ZM296.0 591.1H321.2V593.2H296.0ZM363.2 591.1H371.6V593.2H363.2ZM302.3 593.2H308.6V595.3H302.3ZM310.7 593.2H319.1V595.3H310.7ZM359.0 593.2H369.5V595.3H359.0ZM308.6 595.3H319.1V597.4H308.6ZM354.8 595.3H365.3V597.4H354.8ZM306.5 597.4H308.6V599.5H306.5ZM350.6 597.4H361.1V599.5H350.6ZM304.4 599.5H308.6V601.6H304.4ZM333.8 599.5H335.9V601.6H333.8ZM348.5 599.5H356.9V601.6H348.5ZM302.3 601.6H310.7V603.7H302.3ZM319.1 601.6H321.2V603.7H319.1ZM333.8 601.6H335.9V603.7H333.8ZM346.4 601.6H352.7V603.7H346.4ZM304.4 603.7H306.5V605.8H304.4ZM308.6 603.7H310.7V605.8H308.6ZM312.8 603.7H321.2V605.8H312.8ZM333.8 603.7H342.2V605.8H333.8ZM344.3 603.7H350.6V605.8H344.3ZM308.6 605.8H321.2V607.9H308.6ZM333.8 605.8H348.5V607.9H333.8ZM308.6 607.9H319.1V610.0H308.6ZM340.1 607.9H346.4V610.0H340.1ZM308.6 610.0H319.1V612.1H308.6ZM314.9 612.1H317.0V614.2H314.9Z"/><path fill="#e53b44" d="M380.0 64.0H382.1V66.1H380.0ZM422.0 112.3H424.1V114.4H422.0ZM367.4 156.4H369.5V158.5H367.4ZM293.9 169.0H298.1V171.1H293.9ZM293.9 171.1H298.1V173.2H293.9ZM296.0 173.2H298.1V175.3H296.0ZM342.2 175.3H344.3V177.4H342.2ZM333.8 177.4H348.5V179.5H333.8ZM331.7 179.5H340.1V181.6H331.7ZM346.4 179.5H348.5V181.6H346.4ZM438.8 179.5H440.9V181.6H438.8ZM329.6 181.6H335.9V183.7H329.6ZM346.4 181.6H350.6V183.7H346.4ZM329.6 183.7H335.9V185.8H329.6ZM359.0 183.7H361.1V185.8H359.0ZM327.5 185.8H335.9V187.9H327.5ZM352.7 185.8H356.9V187.9H352.7ZM359.0 185.8H375.8V187.9H359.0ZM327.5 187.9H338.0V190.0H327.5ZM363.2 187.9H365.3V190.0H363.2ZM367.4 187.9H375.8V190.0H367.4ZM329.6 190.0H338.0V192.1H329.6ZM369.5 190.0H371.6V192.1H369.5ZM291.8 192.1H304.4V194.2H291.8ZM329.6 192.1H338.0V194.2H329.6ZM291.8 194.2H293.9V196.3H291.8ZM302.3 194.2H308.6V196.3H302.3ZM331.7 194.2H340.1V196.3H331.7ZM285.5 196.3H293.9V198.4H285.5ZM298.1 196.3H300.2V198.4H298.1ZM306.5 196.3H310.7V198.4H306.5ZM331.7 196.3H338.0V198.4H331.7ZM283.4 198.4H287.6V200.5H283.4ZM291.8 198.4H296.0V200.5H291.8ZM308.6 198.4H317.0V200.5H308.6ZM331.7 198.4H338.0V200.5H331.7ZM256.1 200.5H260.3V202.6H256.1ZM281.3 200.5H291.8V202.6H281.3ZM314.9 200.5H323.3V202.6H314.9ZM333.8 200.5H340.1V202.6H333.8ZM279.2 202.6H283.4V204.7H279.2ZM285.5 202.6H289.7V204.7H285.5ZM321.2 202.6H325.4V204.7H321.2ZM333.8 202.6H335.9V204.7H333.8ZM275.0 204.7H281.3V206.8H275.0ZM285.5 204.7H287.6V206.8H285.5ZM323.3 204.7H329.6V206.8H323.3ZM275.0 206.8H277.1V208.9H275.0ZM325.4 206.8H333.8V208.9H325.4ZM275.0 208.9H277.1V211.0H275.0ZM323.3 208.9H333.8V211.0H323.3ZM275.0 211.0H277.1V213.1H275.0ZM325.4 211.0H333.8V213.1H325.4ZM348.5 211.0H352.7V213.1H348.5ZM275.0 213.1H277.1V215.2H275.0ZM325.4 213.1H333.8V215.2H325.4ZM352.7 213.1H354.8V215.2H352.7ZM275.0 215.2H277.1V217.3H275.0ZM325.4 215.2H335.9V217.3H325.4ZM352.7 215.2H354.8V217.3H352.7ZM275.0 217.3H277.1V219.4H275.0ZM325.4 217.3H335.9V219.4H325.4ZM275.0 219.4H277.1V221.5H275.0ZM329.6 219.4H335.9V221.5H329.6ZM275.0 221.5H277.1V223.6H275.0ZM325.4 221.5H327.5V223.6H325.4ZM329.6 221.5H335.9V223.6H329.6ZM275.0 223.6H277.1V225.7H275.0ZM329.6 223.6H333.8V225.7H329.6ZM241.4 225.7H243.5V227.8H241.4ZM270.8 225.7H277.1V227.8H270.8ZM323.3 225.7H331.7V227.8H323.3ZM241.4 227.8H243.5V229.9H241.4ZM262.4 227.8H272.9V229.9H262.4ZM321.2 227.8H325.4V229.9H321.2ZM241.4 229.9H243.5V232.0H241.4ZM262.4 229.9H272.9V232.0H262.4ZM314.9 229.9H323.3V232.0H314.9ZM262.4 232.0H268.7V234.1H262.4ZM270.8 232.0H272.9V234.1H270.8ZM310.7 232.0H312.8V234.1H310.7ZM314.9 232.0H317.0V234.1H314.9ZM262.4 234.1H266.6V236.2H262.4ZM310.7 234.1H312.8V236.2H310.7ZM262.4 236.2H264.5V238.3H262.4ZM310.7 236.2H312.8V238.3H310.7ZM262.4 238.3H266.6V240.4H262.4ZM310.7 238.3H312.8V240.4H310.7ZM264.5 240.4H266.6V242.5H264.5ZM312.8 240.4H314.9V242.5H312.8ZM264.5 242.5H296.0V244.6H264.5ZM312.8 242.5H323.3V244.6H312.8ZM293.9 244.6H296.0V246.7H293.9ZM321.2 244.6H323.3V246.7H321.2ZM293.9 246.7H296.0V248.8H293.9ZM323.3 246.7H325.4V248.8H323.3ZM293.9 248.8H296.0V250.9H293.9ZM323.3 248.8H331.7V250.9H323.3ZM333.8 248.8H335.9V250.9H333.8ZM293.9 250.9H296.0V253.0H293.9ZM293.9 253.0H296.0V255.1H293.9ZM331.7 253.0H338.0V255.1H331.7ZM293.9 255.1H296.0V257.2H293.9ZM331.7 255.1H338.0V257.2H331.7ZM293.9 257.2H296.0V259.3H293.9ZM331.7 257.2H340.1V259.3H331.7ZM293.9 259.3H296.0V261.4H293.9ZM331.7 259.3H340.1V261.4H331.7ZM293.9 261.4H296.0V263.5H293.9ZM291.8 263.5H296.0V265.6H291.8ZM291.8 265.6H293.9V267.7H291.8ZM220.4 267.7H224.6V269.8H220.4ZM287.6 267.7H293.9V269.8H287.6ZM218.3 269.8H224.6V271.9H218.3ZM285.5 269.8H287.6V271.9H285.5ZM218.3 271.9H224.6V274.0H218.3ZM220.4 274.0H222.5V276.1H220.4Z"/><path fill="#e4a672" d="M422.0 110.2H424.1V112.3H422.0ZM266.6 129.1H270.8V131.2H266.6ZM266.6 131.2H268.7V133.3H266.6ZM272.9 131.2H275.0V133.3H272.9ZM293.9 166.9H296.0V169.0H293.9ZM291.8 169.0H293.9V171.1H291.8ZM293.9 173.2H296.0V175.3H293.9ZM440.9 183.7H445.1V185.8H440.9ZM443.0 185.8H447.2V187.9H443.0ZM445.1 187.9H449.3V190.0H445.1ZM445.1 190.0H447.2V192.1H445.1ZM312.8 204.7H314.9V206.8H312.8ZM304.4 206.8H314.9V208.9H304.4ZM300.2 208.9H310.7V211.0H300.2ZM291.8 211.0H293.9V213.1H291.8ZM296.0 211.0H306.5V213.1H296.0ZM291.8 213.1H306.5V215.2H291.8ZM289.7 215.2H304.4V217.3H289.7ZM308.6 215.2H310.7V217.3H308.6ZM289.7 217.3H306.5V219.4H289.7ZM308.6 217.3H310.7V219.4H308.6ZM289.7 219.4H306.5V221.5H289.7ZM287.6 221.5H304.4V223.6H287.6ZM287.6 223.6H304.4V225.7H287.6ZM289.7 225.7H302.3V227.8H289.7ZM291.8 227.8H304.4V229.9H291.8ZM293.9 229.9H304.4V232.0H293.9ZM291.8 232.0H293.9V234.1H291.8ZM300.2 232.0H302.3V234.1H300.2ZM356.9 257.2H363.2V259.3H356.9ZM352.7 259.3H371.6V261.4H352.7ZM403.1 259.3H415.7V261.4H403.1ZM350.6 261.4H369.5V263.5H350.6ZM398.9 261.4H417.8V263.5H398.9ZM348.5 263.5H367.4V265.6H348.5ZM369.5 263.5H373.7V265.6H369.5ZM392.6 263.5H396.8V265.6H392.6ZM398.9 263.5H419.9V265.6H398.9ZM348.5 265.6H384.2V267.7H348.5ZM392.6 265.6H424.1V267.7H392.6ZM346.4 267.7H426.2V269.8H346.4ZM224.6 269.8H226.7V271.9H224.6ZM344.3 269.8H361.1V271.9H344.3ZM365.3 269.8H424.1V271.9H365.3ZM283.4 271.9H285.5V274.0H283.4ZM344.3 271.9H356.9V274.0H344.3ZM363.2 271.9H394.7V274.0H363.2ZM398.9 271.9H426.2V274.0H398.9ZM270.8 274.0H287.6V276.1H270.8ZM342.2 274.0H352.7V276.1H342.2ZM363.2 274.0H390.5V276.1H363.2ZM401.0 274.0H428.3V276.1H401.0ZM270.8 276.1H289.7V278.2H270.8ZM342.2 276.1H354.8V278.2H342.2ZM363.2 276.1H386.3V278.2H363.2ZM403.1 276.1H432.5V278.2H403.1ZM270.8 278.2H291.8V280.3H270.8ZM293.9 278.2H296.0V280.3H293.9ZM340.1 278.2H350.6V280.3H340.1ZM363.2 278.2H382.1V280.3H363.2ZM401.0 278.2H403.1V280.3H401.0ZM405.2 278.2H409.4V280.3H405.2ZM413.6 278.2H430.4V280.3H413.6ZM268.7 280.3H291.8V282.4H268.7ZM293.9 280.3H300.2V282.4H293.9ZM338.0 280.3H350.6V282.4H338.0ZM361.1 280.3H382.1V282.4H361.1ZM407.3 280.3H409.4V282.4H407.3ZM415.7 280.3H432.5V282.4H415.7ZM268.7 282.4H310.7V284.5H268.7ZM340.1 282.4H348.5V284.5H340.1ZM361.1 282.4H377.9V284.5H361.1ZM422.0 282.4H432.5V284.5H422.0ZM268.7 284.5H312.8V286.6H268.7ZM340.1 284.5H346.4V286.6H340.1ZM361.1 284.5H375.8V286.6H361.1ZM424.1 284.5H434.6V286.6H424.1ZM268.7 286.6H312.8V288.7H268.7ZM340.1 286.6H373.7V288.7H340.1ZM426.2 286.6H436.7V288.7H426.2ZM268.7 288.7H308.6V290.8H268.7ZM342.2 288.7H375.8V290.8H342.2ZM386.3 288.7H394.7V290.8H386.3ZM426.2 288.7H436.7V290.8H426.2ZM268.7 290.8H291.8V292.9H268.7ZM296.0 290.8H308.6V292.9H296.0ZM342.2 290.8H375.8V292.9H342.2ZM382.1 290.8H396.8V292.9H382.1ZM407.3 290.8H409.4V292.9H407.3ZM422.0 290.8H436.7V292.9H422.0ZM268.7 292.9H285.5V295.0H268.7ZM304.4 292.9H310.7V295.0H304.4ZM342.2 292.9H375.8V295.0H342.2ZM377.9 292.9H401.0V295.0H377.9ZM407.3 292.9H411.5V295.0H407.3ZM422.0 292.9H438.8V295.0H422.0ZM260.3 295.0H298.1V297.1H260.3ZM300.2 295.0H310.7V297.1H300.2ZM359.0 295.0H377.9V297.1H359.0ZM384.2 295.0H386.3V297.1H384.2ZM407.3 295.0H436.7V297.1H407.3ZM260.3 297.1H296.0V299.2H260.3ZM300.2 297.1H310.7V299.2H300.2ZM359.0 297.1H373.7V299.2H359.0ZM407.3 297.1H434.6V299.2H407.3ZM260.3 299.2H293.9V301.3H260.3ZM300.2 299.2H310.7V301.3H300.2ZM359.0 299.2H371.6V301.3H359.0ZM409.4 299.2H432.5V301.3H409.4ZM260.3 301.3H279.2V303.4H260.3ZM283.4 301.3H293.9V303.4H283.4ZM300.2 301.3H312.8V303.4H300.2ZM359.0 301.3H365.3V303.4H359.0ZM409.4 301.3H432.5V303.4H409.4ZM262.4 303.4H281.3V305.5H262.4ZM293.9 303.4H296.0V305.5H293.9ZM298.1 303.4H312.8V305.5H298.1ZM356.9 303.4H363.2V305.5H356.9ZM409.4 303.4H428.3V305.5H409.4ZM268.7 305.5H281.3V307.6H268.7ZM296.0 305.5H314.9V307.6H296.0ZM327.5 305.5H335.9V307.6H327.5ZM338.0 305.5H340.1V307.6H338.0ZM354.8 305.5H363.2V307.6H354.8ZM409.4 305.5H413.6V307.6H409.4ZM415.7 305.5H426.2V307.6H415.7ZM266.6 307.6H287.6V309.7H266.6ZM291.8 307.6H317.0V309.7H291.8ZM323.3 307.6H344.3V309.7H323.3ZM352.7 307.6H354.8V309.7H352.7ZM356.9 307.6H363.2V309.7H356.9ZM419.9 307.6H424.1V309.7H419.9ZM266.6 309.7H319.1V311.8H266.6ZM323.3 309.7H361.1V311.8H323.3ZM262.4 311.8H361.1V313.9H262.4ZM262.4 313.9H361.1V316.0H262.4ZM417.8 313.9H419.9V316.0H417.8ZM260.3 316.0H342.2V318.1H260.3ZM346.4 316.0H361.1V318.1H346.4ZM260.3 318.1H342.2V320.2H260.3ZM354.8 318.1H359.0V320.2H354.8ZM222.5 320.2H224.6V322.3H222.5ZM260.3 320.2H338.0V322.3H260.3ZM258.2 322.3H281.3V324.4H258.2ZM287.6 322.3H289.7V324.4H287.6ZM291.8 322.3H338.0V324.4H291.8ZM256.1 324.4H272.9V326.5H256.1ZM277.1 324.4H279.2V326.5H277.1ZM289.7 324.4H333.8V326.5H289.7ZM335.9 324.4H338.0V326.5H335.9ZM409.4 324.4H411.5V326.5H409.4ZM256.1 326.5H272.9V328.6H256.1ZM287.6 326.5H331.7V328.6H287.6ZM401.0 326.5H411.5V328.6H401.0ZM258.2 328.6H270.8V330.7H258.2ZM272.9 328.6H275.0V330.7H272.9ZM293.9 328.6H327.5V330.7H293.9ZM401.0 328.6H409.4V330.7H401.0ZM258.2 330.7H272.9V332.8H258.2ZM293.9 330.7H321.2V332.8H293.9ZM258.2 332.8H270.8V334.9H258.2ZM298.1 332.8H319.1V334.9H298.1ZM407.3 332.8H409.4V334.9H407.3ZM258.2 334.9H270.8V337.0H258.2ZM300.2 334.9H314.9V337.0H300.2ZM256.1 337.0H270.8V339.1H256.1ZM300.2 337.0H310.7V339.1H300.2ZM312.8 337.0H314.9V339.1H312.8ZM256.1 339.1H270.8V341.2H256.1ZM302.3 339.1H312.8V341.2H302.3ZM254.0 341.2H270.8V343.3H254.0ZM300.2 341.2H312.8V343.3H300.2ZM403.1 341.2H405.2V343.3H403.1ZM254.0 343.3H272.9V345.4H254.0ZM300.2 343.3H314.9V345.4H300.2ZM392.6 343.3H398.9V345.4H392.6ZM403.1 343.3H405.2V345.4H403.1ZM251.9 345.4H254.0V347.5H251.9ZM256.1 345.4H275.0V347.5H256.1ZM296.0 345.4H317.0V347.5H296.0ZM390.5 345.4H401.0V347.5H390.5ZM403.1 345.4H407.3V347.5H403.1ZM256.1 347.5H277.1V349.6H256.1ZM296.0 347.5H317.0V349.6H296.0ZM384.2 347.5H407.3V349.6H384.2ZM256.1 349.6H277.1V351.7H256.1ZM293.9 349.6H296.0V351.7H293.9ZM298.1 349.6H317.0V351.7H298.1ZM384.2 349.6H407.3V351.7H384.2ZM256.1 351.7H277.1V353.8H256.1ZM279.2 351.7H281.3V353.8H279.2ZM293.9 351.7H319.1V353.8H293.9ZM384.2 351.7H386.3V353.8H384.2ZM388.4 351.7H407.3V353.8H388.4ZM256.1 353.8H281.3V355.9H256.1ZM293.9 353.8H319.1V355.9H293.9ZM384.2 353.8H386.3V355.9H384.2ZM390.5 353.8H407.3V355.9H390.5ZM256.1 355.9H281.3V358.0H256.1ZM291.8 355.9H319.1V358.0H291.8ZM388.4 355.9H405.2V358.0H388.4ZM256.1 358.0H258.2V360.1H256.1ZM264.5 358.0H319.1V360.1H264.5ZM388.4 358.0H405.2V360.1H388.4ZM266.6 360.1H317.0V362.2H266.6ZM390.5 360.1H409.4V362.2H390.5ZM268.7 362.2H317.0V364.3H268.7ZM390.5 362.2H409.4V364.3H390.5ZM272.9 364.3H319.1V366.4H272.9ZM388.4 364.3H409.4V366.4H388.4ZM443.0 364.3H447.2V366.4H443.0ZM449.3 364.3H451.4V366.4H449.3ZM275.0 366.4H317.0V368.5H275.0ZM390.5 366.4H409.4V368.5H390.5ZM440.9 366.4H451.4V368.5H440.9ZM277.1 368.5H314.9V370.6H277.1ZM388.4 368.5H409.4V370.6H388.4ZM436.7 368.5H451.4V370.6H436.7ZM277.1 370.6H314.9V372.7H277.1ZM390.5 370.6H409.4V372.7H390.5ZM434.6 370.6H449.3V372.7H434.6ZM275.0 372.7H312.8V374.8H275.0ZM390.5 372.7H405.2V374.8H390.5ZM407.3 372.7H409.4V374.8H407.3ZM434.6 372.7H449.3V374.8H434.6ZM277.1 374.8H312.8V376.9H277.1ZM392.6 374.8H407.3V376.9H392.6ZM434.6 374.8H449.3V376.9H434.6ZM277.1 376.9H314.9V379.0H277.1ZM394.7 376.9H409.4V379.0H394.7ZM422.0 376.9H432.5V379.0H422.0ZM436.7 376.9H449.3V379.0H436.7ZM277.1 379.0H314.9V381.1H277.1ZM394.7 379.0H419.9V381.1H394.7ZM422.0 379.0H449.3V381.1H422.0ZM277.1 381.1H317.0V383.2H277.1ZM394.7 381.1H449.3V383.2H394.7ZM279.2 383.2H306.5V385.3H279.2ZM310.7 383.2H314.9V385.3H310.7ZM398.9 383.2H447.2V385.3H398.9ZM279.2 385.3H302.3V387.4H279.2ZM314.9 385.3H317.0V387.4H314.9ZM396.8 385.3H411.5V387.4H396.8ZM415.7 385.3H417.8V387.4H415.7ZM419.9 385.3H438.8V387.4H419.9ZM440.9 385.3H447.2V387.4H440.9ZM249.8 387.4H254.0V389.5H249.8ZM256.1 387.4H258.2V389.5H256.1ZM266.6 387.4H268.7V389.5H266.6ZM275.0 387.4H296.0V389.5H275.0ZM398.9 387.4H411.5V389.5H398.9ZM424.1 387.4H434.6V389.5H424.1ZM440.9 387.4H447.2V389.5H440.9ZM249.8 389.5H262.4V391.6H249.8ZM264.5 389.5H268.7V391.6H264.5ZM270.8 389.5H296.0V391.6H270.8ZM398.9 389.5H409.4V391.6H398.9ZM428.3 389.5H432.5V391.6H428.3ZM440.9 389.5H447.2V391.6H440.9ZM237.2 391.6H293.9V393.7H237.2ZM398.9 391.6H405.2V393.7H398.9ZM440.9 391.6H447.2V393.7H440.9ZM233.0 393.7H298.1V395.8H233.0ZM396.8 393.7H403.1V395.8H396.8ZM440.9 393.7H443.0V395.8H440.9ZM228.8 395.8H243.5V397.9H228.8ZM245.6 395.8H251.9V397.9H245.6ZM258.2 395.8H293.9V397.9H258.2ZM440.9 395.8H443.0V397.9H440.9ZM226.7 397.9H230.9V400.0H226.7ZM235.1 397.9H237.2V400.0H235.1ZM262.4 397.9H296.0V400.0H262.4ZM226.7 400.0H228.8V402.1H226.7ZM262.4 400.0H291.8V402.1H262.4ZM224.6 402.1H228.8V404.2H224.6ZM268.7 402.1H291.8V404.2H268.7ZM224.6 404.2H228.8V406.3H224.6ZM268.7 404.2H298.1V406.3H268.7ZM224.6 406.3H228.8V408.4H224.6ZM266.6 406.3H300.2V408.4H266.6ZM222.5 408.4H228.8V410.5H222.5ZM268.7 408.4H298.1V410.5H268.7ZM300.2 408.4H302.3V410.5H300.2ZM222.5 410.5H226.7V412.6H222.5ZM270.8 410.5H300.2V412.6H270.8ZM220.4 412.6H222.5V414.7H220.4ZM224.6 412.6H226.7V414.7H224.6ZM272.9 412.6H300.2V414.7H272.9ZM317.0 412.6H319.1V414.7H317.0ZM220.4 414.7H222.5V416.8H220.4ZM275.0 414.7H296.0V416.8H275.0ZM314.9 414.7H317.0V416.8H314.9ZM443.0 414.7H445.1V416.8H443.0ZM277.1 416.8H296.0V418.9H277.1ZM314.9 416.8H317.0V418.9H314.9ZM440.9 416.8H445.1V418.9H440.9ZM277.1 418.9H289.7V421.0H277.1ZM293.9 418.9H296.0V421.0H293.9ZM314.9 418.9H317.0V421.0H314.9ZM445.1 418.9H447.2V421.0H445.1ZM220.4 421.0H222.5V423.1H220.4ZM277.1 421.0H285.5V423.1H277.1ZM312.8 421.0H317.0V423.1H312.8ZM445.1 421.0H449.3V423.1H445.1ZM314.9 423.1H319.1V425.2H314.9ZM447.2 423.1H451.4V425.2H447.2ZM449.3 425.2H451.4V427.3H449.3ZM214.1 427.3H218.3V429.4H214.1ZM405.2 427.3H411.5V429.4H405.2ZM438.8 427.3H440.9V429.4H438.8ZM443.0 427.3H449.3V429.4H443.0ZM214.1 429.4H218.3V431.5H214.1ZM403.1 429.4H407.3V431.5H403.1ZM443.0 429.4H449.3V431.5H443.0ZM214.1 431.5H218.3V433.6H214.1ZM403.1 431.5H407.3V433.6H403.1ZM438.8 431.5H449.3V433.6H438.8ZM216.2 433.6H218.3V435.7H216.2ZM405.2 433.6H407.3V435.7H405.2ZM443.0 433.6H447.2V435.7H443.0ZM216.2 435.7H220.4V437.8H216.2ZM275.0 435.7H277.1V437.8H275.0ZM283.4 435.7H285.5V437.8H283.4ZM403.1 435.7H405.2V437.8H403.1ZM443.0 435.7H447.2V437.8H443.0ZM218.3 437.8H220.4V439.9H218.3ZM268.7 437.8H285.5V439.9H268.7ZM298.1 437.8H302.3V439.9H298.1ZM390.5 437.8H396.8V439.9H390.5ZM401.0 437.8H405.2V439.9H401.0ZM443.0 437.8H445.1V439.9H443.0ZM218.3 439.9H222.5V442.0H218.3ZM268.7 439.9H293.9V442.0H268.7ZM296.0 439.9H300.2V442.0H296.0ZM396.8 439.9H398.9V442.0H396.8ZM436.7 439.9H438.8V442.0H436.7ZM440.9 439.9H445.1V442.0H440.9ZM220.4 442.0H226.7V444.1H220.4ZM241.4 442.0H243.5V444.1H241.4ZM247.7 442.0H249.8V444.1H247.7ZM264.5 442.0H266.6V444.1H264.5ZM279.2 442.0H300.2V444.1H279.2ZM434.6 442.0H436.7V444.1H434.6ZM438.8 442.0H443.0V444.1H438.8ZM222.5 444.1H230.9V446.2H222.5ZM235.1 444.1H249.8V446.2H235.1ZM285.5 444.1H287.6V446.2H285.5ZM293.9 444.1H298.1V446.2H293.9ZM434.6 444.1H436.7V446.2H434.6ZM438.8 444.1H440.9V446.2H438.8ZM224.6 446.2H239.3V448.3H224.6ZM424.1 446.2H426.2V448.3H424.1ZM430.4 446.2H438.8V448.3H430.4ZM422.0 448.3H424.1V450.4H422.0ZM426.2 448.3H436.7V450.4H426.2ZM419.9 450.4H434.6V452.5H419.9ZM419.9 452.5H432.5V454.6H419.9ZM419.9 454.6H432.5V456.7H419.9ZM417.8 456.7H430.4V458.8H417.8ZM293.9 458.8H296.0V460.9H293.9ZM419.9 458.8H428.3V460.9H419.9ZM279.2 460.9H281.3V463.0H279.2ZM289.7 460.9H293.9V463.0H289.7ZM419.9 460.9H426.2V463.0H419.9ZM289.7 463.0H296.0V465.1H289.7ZM422.0 463.0H426.2V465.1H422.0ZM277.1 465.1H279.2V467.2H277.1ZM287.6 465.1H298.1V467.2H287.6ZM419.9 465.1H424.1V467.2H419.9ZM275.0 467.2H279.2V469.3H275.0ZM287.6 467.2H296.0V469.3H287.6ZM419.9 467.2H422.0V469.3H419.9ZM270.8 469.3H277.1V471.4H270.8ZM287.6 469.3H296.0V471.4H287.6ZM268.7 471.4H275.0V473.5H268.7ZM287.6 471.4H296.0V473.5H287.6ZM287.6 473.5H291.8V475.6H287.6ZM289.7 475.6H293.9V477.7H289.7ZM409.4 475.6H411.5V477.7H409.4ZM291.8 477.7H293.9V479.8H291.8ZM411.5 477.7H415.7V479.8H411.5ZM268.7 479.8H272.9V481.9H268.7ZM275.0 479.8H277.1V481.9H275.0ZM289.7 479.8H291.8V481.9H289.7ZM407.3 479.8H409.4V481.9H407.3ZM411.5 479.8H413.6V481.9H411.5ZM256.1 481.9H258.2V484.0H256.1ZM266.6 481.9H281.3V484.0H266.6ZM409.4 481.9H411.5V484.0H409.4ZM230.9 484.0H239.3V486.1H230.9ZM256.1 484.0H258.2V486.1H256.1ZM266.6 484.0H277.1V486.1H266.6ZM407.3 484.0H409.4V486.1H407.3ZM228.8 486.1H241.4V488.2H228.8ZM254.0 486.1H256.1V488.2H254.0ZM266.6 486.1H272.9V488.2H266.6ZM228.8 488.2H241.4V490.3H228.8ZM264.5 488.2H266.6V490.3H264.5ZM228.8 490.3H241.4V492.4H228.8ZM264.5 490.3H266.6V492.4H264.5ZM230.9 492.4H239.3V494.5H230.9ZM264.5 492.4H266.6V494.5H264.5ZM247.7 496.6H249.8V498.7H247.7ZM247.7 498.7H251.9V500.8H247.7ZM251.9 500.8H254.0V502.9H251.9ZM258.2 502.9H260.3V505.0H258.2ZM394.7 502.9H396.8V505.0H394.7ZM260.3 505.0H262.4V507.1H260.3ZM394.7 505.0H401.0V507.1H394.7ZM264.5 507.1H266.6V509.2H264.5ZM380.0 507.1H382.1V509.2H380.0ZM394.7 507.1H403.1V509.2H394.7ZM264.5 509.2H268.7V511.3H264.5ZM371.6 509.2H377.9V511.3H371.6ZM390.5 509.2H415.7V511.3H390.5ZM266.6 511.3H272.9V513.4H266.6ZM371.6 511.3H384.2V513.4H371.6ZM386.3 511.3H413.6V513.4H386.3ZM266.6 513.4H275.0V515.5H266.6ZM369.5 513.4H411.5V515.5H369.5ZM266.6 515.5H279.2V517.6H266.6ZM369.5 515.5H371.6V517.6H369.5ZM382.1 515.5H409.4V517.6H382.1ZM268.7 517.6H270.8V519.7H268.7ZM369.5 517.6H371.6V519.7H369.5ZM382.1 517.6H409.4V519.7H382.1ZM268.7 519.7H270.8V521.8H268.7ZM369.5 519.7H371.6V521.8H369.5ZM382.1 519.7H407.3V521.8H382.1ZM270.8 521.8H272.9V523.9H270.8ZM277.1 521.8H279.2V523.9H277.1ZM367.4 521.8H371.6V523.9H367.4ZM377.9 521.8H405.2V523.9H377.9ZM270.8 523.9H272.9V526.0H270.8ZM277.1 523.9H279.2V526.0H277.1ZM363.2 523.9H367.4V526.0H363.2ZM369.5 523.9H403.1V526.0H369.5ZM371.6 526.0H401.0V528.1H371.6ZM272.9 528.1H275.0V530.2H272.9ZM380.0 528.1H396.8V530.2H380.0ZM380.0 530.2H394.7V532.3H380.0ZM275.0 532.3H277.1V534.4H275.0ZM388.4 532.3H390.5V534.4H388.4ZM277.1 534.4H279.2V536.5H277.1ZM279.2 538.6H281.3V540.7H279.2ZM369.5 540.7H375.8V542.8H369.5ZM369.5 542.8H375.8V544.9H369.5ZM369.5 544.9H382.1V547.0H369.5ZM369.5 547.0H380.0V549.1H369.5ZM371.6 549.1H380.0V551.2H371.6ZM371.6 551.2H377.9V553.3H371.6ZM373.7 553.3H377.9V555.4H373.7ZM373.7 555.4H377.9V557.5H373.7Z"/><path fill="#b86f50" d="M264.5 129.1H266.6V131.2H264.5ZM291.8 171.1H293.9V173.2H291.8ZM361.1 200.5H363.2V202.6H361.1ZM350.6 202.6H352.7V204.7H350.6ZM356.9 202.6H359.0V204.7H356.9ZM348.5 204.7H361.1V206.8H348.5ZM344.3 206.8H346.4V208.9H344.3ZM350.6 206.8H359.0V208.9H350.6ZM350.6 208.9H359.0V211.0H350.6ZM352.7 211.0H359.0V213.1H352.7ZM350.6 213.1H352.7V215.2H350.6ZM354.8 213.1H359.0V215.2H354.8ZM308.6 242.5H312.8V244.6H308.6ZM308.6 244.6H321.2V246.7H308.6ZM308.6 246.7H323.3V248.8H308.6ZM308.6 248.8H323.3V250.9H308.6ZM308.6 250.9H338.0V253.0H308.6ZM304.4 253.0H331.7V255.1H304.4ZM308.6 255.1H323.3V257.2H308.6ZM363.2 255.1H377.9V257.2H363.2ZM304.4 257.2H321.2V259.3H304.4ZM363.2 257.2H382.1V259.3H363.2ZM384.2 257.2H386.3V259.3H384.2ZM306.5 259.3H321.2V261.4H306.5ZM350.6 259.3H352.7V261.4H350.6ZM371.6 259.3H382.1V261.4H371.6ZM392.6 259.3H394.7V261.4H392.6ZM398.9 259.3H403.1V261.4H398.9ZM415.7 259.3H417.8V261.4H415.7ZM308.6 261.4H319.1V263.5H308.6ZM344.3 261.4H350.6V263.5H344.3ZM369.5 261.4H384.2V263.5H369.5ZM386.3 261.4H398.9V263.5H386.3ZM417.8 261.4H419.9V263.5H417.8ZM304.4 263.5H317.0V265.6H304.4ZM344.3 263.5H348.5V265.6H344.3ZM367.4 263.5H369.5V265.6H367.4ZM373.7 263.5H392.6V265.6H373.7ZM396.8 263.5H398.9V265.6H396.8ZM419.9 263.5H424.1V265.6H419.9ZM304.4 265.6H317.0V267.7H304.4ZM342.2 265.6H348.5V267.7H342.2ZM384.2 265.6H392.6V267.7H384.2ZM304.4 267.7H317.0V269.8H304.4ZM342.2 267.7H346.4V269.8H342.2ZM306.5 269.8H314.9V271.9H306.5ZM335.9 269.8H344.3V271.9H335.9ZM216.2 271.9H218.3V274.0H216.2ZM279.2 271.9H281.3V274.0H279.2ZM289.7 271.9H291.8V274.0H289.7ZM306.5 271.9H317.0V274.0H306.5ZM340.1 271.9H344.3V274.0H340.1ZM216.2 274.0H220.4V276.1H216.2ZM287.6 274.0H291.8V276.1H287.6ZM308.6 274.0H317.0V276.1H308.6ZM340.1 274.0H342.2V276.1H340.1ZM428.3 274.0H430.4V276.1H428.3ZM289.7 276.1H291.8V278.2H289.7ZM310.7 276.1H312.8V278.2H310.7ZM338.0 276.1H340.1V278.2H338.0ZM291.8 278.2H293.9V280.3H291.8ZM296.0 278.2H298.1V280.3H296.0ZM300.2 278.2H304.4V280.3H300.2ZM306.5 278.2H312.8V280.3H306.5ZM266.6 280.3H268.7V282.4H266.6ZM291.8 280.3H293.9V282.4H291.8ZM300.2 280.3H312.8V282.4H300.2ZM264.5 282.4H268.7V284.5H264.5ZM432.5 282.4H436.7V284.5H432.5ZM264.5 284.5H268.7V286.6H264.5ZM434.6 284.5H436.7V286.6H434.6ZM438.8 284.5H440.9V286.6H438.8ZM266.6 286.6H268.7V288.7H266.6ZM436.7 286.6H440.9V288.7H436.7ZM266.6 288.7H268.7V290.8H266.6ZM436.7 288.7H440.9V290.8H436.7ZM266.6 290.8H268.7V292.9H266.6ZM291.8 290.8H296.0V292.9H291.8ZM340.1 290.8H342.2V292.9H340.1ZM436.7 290.8H440.9V292.9H436.7ZM266.6 292.9H268.7V295.0H266.6ZM285.5 292.9H287.6V295.0H285.5ZM298.1 292.9H304.4V295.0H298.1ZM338.0 292.9H340.1V295.0H338.0ZM438.8 292.9H440.9V295.0H438.8ZM436.7 295.0H440.9V297.1H436.7ZM356.9 297.1H359.0V299.2H356.9ZM434.6 297.1H436.7V299.2H434.6ZM356.9 299.2H359.0V301.3H356.9ZM432.5 299.2H436.7V301.3H432.5ZM432.5 301.3H434.6V303.4H432.5ZM428.3 303.4H434.6V305.5H428.3ZM260.3 305.5H262.4V307.6H260.3ZM264.5 305.5H268.7V307.6H264.5ZM340.1 305.5H346.4V307.6H340.1ZM426.2 305.5H434.6V307.6H426.2ZM262.4 307.6H266.6V309.7H262.4ZM321.2 307.6H323.3V309.7H321.2ZM344.3 307.6H352.7V309.7H344.3ZM354.8 307.6H356.9V309.7H354.8ZM424.1 307.6H432.5V309.7H424.1ZM260.3 309.7H266.6V311.8H260.3ZM319.1 309.7H323.3V311.8H319.1ZM422.0 309.7H430.4V311.8H422.0ZM260.3 311.8H262.4V313.9H260.3ZM417.8 311.8H430.4V313.9H417.8ZM260.3 313.9H262.4V316.0H260.3ZM415.7 313.9H417.8V316.0H415.7ZM419.9 313.9H428.3V316.0H419.9ZM415.7 316.0H424.1V318.1H415.7ZM415.7 318.1H422.0V320.2H415.7ZM258.2 320.2H260.3V322.3H258.2ZM413.6 320.2H417.8V322.3H413.6ZM419.9 320.2H422.0V322.3H419.9ZM222.5 322.3H224.6V324.4H222.5ZM256.1 322.3H258.2V324.4H256.1ZM409.4 322.3H411.5V324.4H409.4ZM413.6 322.3H417.8V324.4H413.6ZM419.9 322.3H422.0V324.4H419.9ZM222.5 324.4H224.6V326.5H222.5ZM411.5 324.4H415.7V326.5H411.5ZM422.0 324.4H424.1V326.5H422.0ZM411.5 326.5H415.7V328.6H411.5ZM256.1 328.6H258.2V330.7H256.1ZM409.4 328.6H415.7V330.7H409.4ZM256.1 330.7H258.2V332.8H256.1ZM401.0 330.7H413.6V332.8H401.0ZM415.7 330.7H417.8V332.8H415.7ZM256.1 332.8H258.2V334.9H256.1ZM396.8 332.8H407.3V334.9H396.8ZM409.4 332.8H415.7V334.9H409.4ZM254.0 334.9H258.2V337.0H254.0ZM398.9 334.9H411.5V337.0H398.9ZM254.0 337.0H256.1V339.1H254.0ZM396.8 337.0H409.4V339.1H396.8ZM394.7 339.1H405.2V341.2H394.7ZM407.3 339.1H409.4V341.2H407.3ZM396.8 341.2H403.1V343.3H396.8ZM398.9 343.3H403.1V345.4H398.9ZM401.0 345.4H403.1V347.5H401.0ZM254.0 349.6H256.1V351.7H254.0ZM407.3 349.6H409.4V351.7H407.3ZM254.0 351.7H256.1V353.8H254.0ZM407.3 351.7H411.5V353.8H407.3ZM407.3 353.8H413.6V355.9H407.3ZM405.2 355.9H413.6V358.0H405.2ZM260.3 358.0H262.4V360.1H260.3ZM405.2 358.0H411.5V360.1H405.2ZM415.7 358.0H419.9V360.1H415.7ZM264.5 360.1H266.6V362.2H264.5ZM409.4 360.1H411.5V362.2H409.4ZM415.7 360.1H417.8V362.2H415.7ZM266.6 362.2H268.7V364.3H266.6ZM409.4 362.2H419.9V364.3H409.4ZM422.0 362.2H424.1V364.3H422.0ZM268.7 364.3H272.9V366.4H268.7ZM409.4 364.3H424.1V366.4H409.4ZM272.9 366.4H275.0V368.5H272.9ZM409.4 366.4H428.3V368.5H409.4ZM272.9 368.5H277.1V370.6H272.9ZM409.4 368.5H436.7V370.6H409.4ZM275.0 370.6H277.1V372.7H275.0ZM409.4 370.6H434.6V372.7H409.4ZM449.3 370.6H451.4V372.7H449.3ZM405.2 372.7H407.3V374.8H405.2ZM409.4 372.7H434.6V374.8H409.4ZM407.3 374.8H434.6V376.9H407.3ZM409.4 376.9H422.0V379.0H409.4ZM432.5 376.9H436.7V379.0H432.5ZM275.0 379.0H277.1V381.1H275.0ZM419.9 379.0H422.0V381.1H419.9ZM275.0 381.1H277.1V383.2H275.0ZM270.8 383.2H279.2V385.3H270.8ZM266.6 385.3H279.2V387.4H266.6ZM262.4 387.4H266.6V389.5H262.4ZM268.7 387.4H275.0V389.5H268.7ZM262.4 389.5H264.5V391.6H262.4ZM268.7 389.5H270.8V391.6H268.7ZM222.5 406.3H224.6V408.4H222.5ZM220.4 410.5H222.5V412.6H220.4ZM443.0 412.6H445.1V414.7H443.0ZM447.2 414.7H449.3V416.8H447.2ZM445.1 416.8H449.3V418.9H445.1ZM447.2 418.9H449.3V421.0H447.2Z"/><path fill="#fb922b" d="M346.4 141.7H348.5V143.8H346.4ZM344.3 143.8H348.5V145.9H344.3ZM342.2 145.9H348.5V148.0H342.2ZM342.2 148.0H348.5V150.1H342.2ZM340.1 179.5H346.4V181.6H340.1ZM335.9 181.6H346.4V183.7H335.9ZM335.9 183.7H350.6V185.8H335.9ZM335.9 185.8H352.7V187.9H335.9ZM356.9 185.8H359.0V187.9H356.9ZM338.0 187.9H363.2V190.0H338.0ZM365.3 187.9H367.4V190.0H365.3ZM338.0 190.0H369.5V192.1H338.0ZM371.6 190.0H375.8V192.1H371.6ZM338.0 192.1H373.7V194.2H338.0ZM293.9 194.2H302.3V196.3H293.9ZM340.1 194.2H373.7V196.3H340.1ZM293.9 196.3H298.1V198.4H293.9ZM300.2 196.3H306.5V198.4H300.2ZM338.0 196.3H371.6V198.4H338.0ZM287.6 198.4H291.8V200.5H287.6ZM296.0 198.4H308.6V200.5H296.0ZM338.0 198.4H369.5V200.5H338.0ZM291.8 200.5H314.9V202.6H291.8ZM340.1 200.5H361.1V202.6H340.1ZM363.2 200.5H367.4V202.6H363.2ZM283.4 202.6H285.5V204.7H283.4ZM289.7 202.6H321.2V204.7H289.7ZM340.1 202.6H350.6V204.7H340.1ZM352.7 202.6H356.9V204.7H352.7ZM359.0 202.6H361.1V204.7H359.0ZM281.3 204.7H285.5V206.8H281.3ZM287.6 204.7H312.8V206.8H287.6ZM314.9 204.7H323.3V206.8H314.9ZM342.2 204.7H348.5V206.8H342.2ZM277.1 206.8H304.4V208.9H277.1ZM314.9 206.8H325.4V208.9H314.9ZM346.4 206.8H350.6V208.9H346.4ZM277.1 208.9H300.2V211.0H277.1ZM310.7 208.9H323.3V211.0H310.7ZM346.4 208.9H350.6V211.0H346.4ZM277.1 211.0H291.8V213.1H277.1ZM293.9 211.0H296.0V213.1H293.9ZM306.5 211.0H325.4V213.1H306.5ZM277.1 213.1H291.8V215.2H277.1ZM306.5 213.1H325.4V215.2H306.5ZM277.1 215.2H289.7V217.3H277.1ZM304.4 215.2H308.6V217.3H304.4ZM310.7 215.2H325.4V217.3H310.7ZM277.1 217.3H289.7V219.4H277.1ZM306.5 217.3H308.6V219.4H306.5ZM310.7 217.3H325.4V219.4H310.7ZM277.1 219.4H289.7V221.5H277.1ZM306.5 219.4H329.6V221.5H306.5ZM277.1 221.5H287.6V223.6H277.1ZM304.4 221.5H325.4V223.6H304.4ZM327.5 221.5H329.6V223.6H327.5ZM277.1 223.6H287.6V225.7H277.1ZM304.4 223.6H329.6V225.7H304.4ZM277.1 225.7H289.7V227.8H277.1ZM302.3 225.7H323.3V227.8H302.3ZM272.9 227.8H291.8V229.9H272.9ZM304.4 227.8H321.2V229.9H304.4ZM272.9 229.9H293.9V232.0H272.9ZM304.4 229.9H314.9V232.0H304.4ZM268.7 232.0H270.8V234.1H268.7ZM272.9 232.0H291.8V234.1H272.9ZM293.9 232.0H300.2V234.1H293.9ZM302.3 232.0H310.7V234.1H302.3ZM266.6 234.1H310.7V236.2H266.6ZM264.5 236.2H310.7V238.3H264.5ZM266.6 238.3H310.7V240.4H266.6ZM266.6 240.4H312.8V242.5H266.6ZM296.0 242.5H308.6V244.6H296.0ZM296.0 244.6H308.6V246.7H296.0ZM407.3 244.6H415.7V246.7H407.3ZM296.0 246.7H308.6V248.8H296.0ZM405.2 246.7H417.8V248.8H405.2ZM296.0 248.8H308.6V250.9H296.0ZM356.9 248.8H359.0V250.9H356.9ZM403.1 248.8H419.9V250.9H403.1ZM296.0 250.9H308.6V253.0H296.0ZM354.8 250.9H365.3V253.0H354.8ZM401.0 250.9H419.9V253.0H401.0ZM296.0 253.0H304.4V255.1H296.0ZM352.7 253.0H419.9V255.1H352.7ZM296.0 255.1H308.6V257.2H296.0ZM323.3 255.1H331.7V257.2H323.3ZM350.6 255.1H363.2V257.2H350.6ZM377.9 255.1H422.0V257.2H377.9ZM296.0 257.2H304.4V259.3H296.0ZM321.2 257.2H331.7V259.3H321.2ZM340.1 257.2H356.9V259.3H340.1ZM382.1 257.2H384.2V259.3H382.1ZM386.3 257.2H422.0V259.3H386.3ZM296.0 259.3H306.5V261.4H296.0ZM321.2 259.3H331.7V261.4H321.2ZM340.1 259.3H350.6V261.4H340.1ZM382.1 259.3H392.6V261.4H382.1ZM394.7 259.3H398.9V261.4H394.7ZM417.8 259.3H428.3V261.4H417.8ZM296.0 261.4H308.6V263.5H296.0ZM327.5 261.4H344.3V263.5H327.5ZM384.2 261.4H386.3V263.5H384.2ZM419.9 261.4H428.3V263.5H419.9ZM296.0 263.5H304.4V265.6H296.0ZM317.0 263.5H319.1V265.6H317.0ZM329.6 263.5H344.3V265.6H329.6ZM424.1 263.5H428.3V265.6H424.1ZM293.9 265.6H304.4V267.7H293.9ZM317.0 265.6H319.1V267.7H317.0ZM331.7 265.6H342.2V267.7H331.7ZM424.1 265.6H430.4V267.7H424.1ZM293.9 267.7H304.4V269.8H293.9ZM317.0 267.7H319.1V269.8H317.0ZM333.8 267.7H342.2V269.8H333.8ZM426.2 267.7H430.4V269.8H426.2ZM272.9 269.8H285.5V271.9H272.9ZM287.6 269.8H306.5V271.9H287.6ZM314.9 269.8H319.1V271.9H314.9ZM424.1 269.8H430.4V271.9H424.1ZM272.9 271.9H279.2V274.0H272.9ZM281.3 271.9H283.4V274.0H281.3ZM285.5 271.9H289.7V274.0H285.5ZM291.8 271.9H306.5V274.0H291.8ZM317.0 271.9H319.1V274.0H317.0ZM335.9 271.9H340.1V274.0H335.9ZM426.2 271.9H432.5V274.0H426.2ZM291.8 274.0H308.6V276.1H291.8ZM317.0 274.0H321.2V276.1H317.0ZM335.9 274.0H340.1V276.1H335.9ZM430.4 274.0H436.7V276.1H430.4ZM291.8 276.1H310.7V278.2H291.8ZM312.8 276.1H323.3V278.2H312.8ZM331.7 276.1H338.0V278.2H331.7ZM340.1 276.1H342.2V278.2H340.1ZM432.5 276.1H438.8V278.2H432.5ZM298.1 278.2H300.2V280.3H298.1ZM304.4 278.2H306.5V280.3H304.4ZM312.8 278.2H340.1V280.3H312.8ZM430.4 278.2H440.9V280.3H430.4ZM264.5 280.3H266.6V282.4H264.5ZM312.8 280.3H338.0V282.4H312.8ZM432.5 280.3H443.0V282.4H432.5ZM310.7 282.4H340.1V284.5H310.7ZM436.7 282.4H443.0V284.5H436.7ZM312.8 284.5H340.1V286.6H312.8ZM436.7 284.5H438.8V286.6H436.7ZM440.9 284.5H443.0V286.6H440.9ZM262.4 286.6H266.6V288.7H262.4ZM312.8 286.6H340.1V288.7H312.8ZM440.9 286.6H445.1V288.7H440.9ZM262.4 288.7H266.6V290.8H262.4ZM323.3 288.7H342.2V290.8H323.3ZM440.9 288.7H445.1V290.8H440.9ZM262.4 290.8H266.6V292.9H262.4ZM323.3 290.8H340.1V292.9H323.3ZM440.9 290.8H445.1V292.9H440.9ZM262.4 292.9H266.6V295.0H262.4ZM287.6 292.9H298.1V295.0H287.6ZM323.3 292.9H338.0V295.0H323.3ZM340.1 292.9H342.2V295.0H340.1ZM440.9 292.9H443.0V295.0H440.9ZM323.3 295.0H359.0V297.1H323.3ZM440.9 295.0H443.0V297.1H440.9ZM323.3 297.1H356.9V299.2H323.3ZM310.7 299.2H356.9V301.3H310.7ZM312.8 301.3H359.0V303.4H312.8ZM260.3 303.4H262.4V305.5H260.3ZM312.8 303.4H356.9V305.5H312.8ZM262.4 305.5H264.5V307.6H262.4ZM314.9 305.5H327.5V307.6H314.9ZM335.9 305.5H338.0V307.6H335.9ZM346.4 305.5H354.8V307.6H346.4ZM258.2 307.6H262.4V309.7H258.2ZM317.0 307.6H321.2V309.7H317.0ZM432.5 307.6H434.6V309.7H432.5ZM258.2 309.7H260.3V311.8H258.2ZM430.4 309.7H434.6V311.8H430.4ZM258.2 311.8H260.3V313.9H258.2ZM430.4 311.8H434.6V313.9H430.4ZM256.1 313.9H260.3V316.0H256.1ZM428.3 313.9H434.6V316.0H428.3ZM256.1 316.0H260.3V318.1H256.1ZM424.1 316.0H434.6V318.1H424.1ZM254.0 318.1H260.3V320.2H254.0ZM422.0 318.1H432.5V320.2H422.0ZM251.9 320.2H258.2V322.3H251.9ZM417.8 320.2H419.9V322.3H417.8ZM422.0 320.2H432.5V322.3H422.0ZM249.8 322.3H256.1V324.4H249.8ZM417.8 322.3H419.9V324.4H417.8ZM422.0 322.3H432.5V324.4H422.0ZM247.7 324.4H256.1V326.5H247.7ZM415.7 324.4H422.0V326.5H415.7ZM424.1 324.4H432.5V326.5H424.1ZM247.7 326.5H256.1V328.6H247.7ZM415.7 326.5H432.5V328.6H415.7ZM247.7 328.6H256.1V330.7H247.7ZM415.7 328.6H432.5V330.7H415.7ZM245.6 330.7H256.1V332.8H245.6ZM413.6 330.7H415.7V332.8H413.6ZM417.8 330.7H434.6V332.8H417.8ZM245.6 332.8H256.1V334.9H245.6ZM415.7 332.8H434.6V334.9H415.7ZM245.6 334.9H254.0V337.0H245.6ZM411.5 334.9H434.6V337.0H411.5ZM245.6 337.0H254.0V339.1H245.6ZM409.4 337.0H434.6V339.1H409.4ZM245.6 339.1H256.1V341.2H245.6ZM405.2 339.1H407.3V341.2H405.2ZM409.4 339.1H434.6V341.2H409.4ZM245.6 341.2H254.0V343.3H245.6ZM405.2 341.2H434.6V343.3H405.2ZM245.6 343.3H254.0V345.4H245.6ZM405.2 343.3H434.6V345.4H405.2ZM247.7 345.4H251.9V347.5H247.7ZM254.0 345.4H256.1V347.5H254.0ZM407.3 345.4H434.6V347.5H407.3ZM247.7 347.5H256.1V349.6H247.7ZM407.3 347.5H434.6V349.6H407.3ZM249.8 349.6H254.0V351.7H249.8ZM409.4 349.6H434.6V351.7H409.4ZM249.8 351.7H254.0V353.8H249.8ZM411.5 351.7H419.9V353.8H411.5ZM430.4 351.7H434.6V353.8H430.4ZM251.9 353.8H256.1V355.9H251.9ZM413.6 353.8H419.9V355.9H413.6ZM430.4 353.8H434.6V355.9H430.4ZM254.0 355.9H256.1V358.0H254.0ZM413.6 355.9H419.9V358.0H413.6ZM430.4 355.9H436.7V358.0H430.4ZM258.2 358.0H260.3V360.1H258.2ZM262.4 358.0H264.5V360.1H262.4ZM411.5 358.0H415.7V360.1H411.5ZM430.4 358.0H440.9V360.1H430.4ZM258.2 360.1H264.5V362.2H258.2ZM411.5 360.1H415.7V362.2H411.5ZM417.8 360.1H419.9V362.2H417.8ZM430.4 360.1H451.4V362.2H430.4ZM260.3 362.2H266.6V364.3H260.3ZM424.1 362.2H451.4V364.3H424.1ZM262.4 364.3H268.7V366.4H262.4ZM424.1 364.3H443.0V366.4H424.1ZM447.2 364.3H449.3V366.4H447.2ZM264.5 366.4H272.9V368.5H264.5ZM428.3 366.4H440.9V368.5H428.3ZM268.7 368.5H272.9V370.6H268.7ZM251.9 383.2H256.1V385.3H251.9ZM258.2 383.2H270.8V385.3H258.2ZM251.9 385.3H266.6V387.4H251.9ZM254.0 387.4H256.1V389.5H254.0ZM258.2 387.4H262.4V389.5H258.2ZM218.3 416.8H220.4V418.9H218.3ZM218.3 418.9H220.4V421.0H218.3ZM449.3 418.9H451.4V421.0H449.3ZM214.1 421.0H220.4V423.1H214.1ZM449.3 421.0H451.4V423.1H449.3ZM214.1 423.1H220.4V425.2H214.1ZM214.1 425.2H220.4V427.3H214.1Z"/><path fill="#5a5a5a" d="M323.3 269.8H331.7V271.9H323.3ZM323.3 271.9H331.7V274.0H323.3ZM403.1 492.4H409.4V494.5H403.1ZM403.1 494.5H409.4V496.6H403.1ZM403.1 496.6H409.4V498.7H403.1ZM403.1 498.7H409.4V500.8H403.1ZM321.2 586.9H323.3V589.0H321.2ZM321.2 589.0H333.8V591.1H321.2ZM321.2 591.1H333.8V593.2H321.2ZM319.1 593.2H333.8V595.3H319.1ZM319.1 595.3H333.8V597.4H319.1ZM319.1 597.4H333.8V599.5H319.1ZM319.1 599.5H333.8V601.6H319.1ZM321.2 601.6H333.8V603.7H321.2ZM321.2 603.7H333.8V605.8H321.2ZM321.2 605.8H331.7V607.9H321.2ZM329.6 607.9H331.7V610.0H329.6Z"/><path fill="#ffe762" d="M361.1 269.8H365.3V271.9H361.1ZM356.9 271.9H363.2V274.0H356.9ZM394.7 271.9H398.9V274.0H394.7ZM352.7 274.0H363.2V276.1H352.7ZM390.5 274.0H401.0V276.1H390.5ZM354.8 276.1H363.2V278.2H354.8ZM386.3 276.1H403.1V278.2H386.3ZM350.6 278.2H363.2V280.3H350.6ZM382.1 278.2H401.0V280.3H382.1ZM403.1 278.2H405.2V280.3H403.1ZM409.4 278.2H413.6V280.3H409.4ZM350.6 280.3H361.1V282.4H350.6ZM382.1 280.3H407.3V282.4H382.1ZM409.4 280.3H415.7V282.4H409.4ZM348.5 282.4H361.1V284.5H348.5ZM377.9 282.4H422.0V284.5H377.9ZM346.4 284.5H361.1V286.6H346.4ZM375.8 284.5H424.1V286.6H375.8ZM373.7 286.6H426.2V288.7H373.7ZM375.8 288.7H386.3V290.8H375.8ZM394.7 288.7H426.2V290.8H394.7ZM375.8 290.8H382.1V292.9H375.8ZM396.8 290.8H407.3V292.9H396.8ZM409.4 290.8H422.0V292.9H409.4ZM375.8 292.9H377.9V295.0H375.8ZM401.0 292.9H407.3V295.0H401.0ZM411.5 292.9H422.0V295.0H411.5ZM298.1 295.0H300.2V297.1H298.1ZM377.9 295.0H384.2V297.1H377.9ZM386.3 295.0H407.3V297.1H386.3ZM296.0 297.1H300.2V299.2H296.0ZM373.7 297.1H407.3V299.2H373.7ZM293.9 299.2H300.2V301.3H293.9ZM371.6 299.2H409.4V301.3H371.6ZM279.2 301.3H283.4V303.4H279.2ZM293.9 301.3H300.2V303.4H293.9ZM365.3 301.3H409.4V303.4H365.3ZM281.3 303.4H293.9V305.5H281.3ZM296.0 303.4H298.1V305.5H296.0ZM363.2 303.4H409.4V305.5H363.2ZM281.3 305.5H296.0V307.6H281.3ZM363.2 305.5H409.4V307.6H363.2ZM413.6 305.5H415.7V307.6H413.6ZM287.6 307.6H291.8V309.7H287.6ZM363.2 307.6H419.9V309.7H363.2ZM361.1 309.7H388.4V311.8H361.1ZM396.8 309.7H422.0V311.8H396.8ZM361.1 311.8H384.2V313.9H361.1ZM388.4 311.8H390.5V313.9H388.4ZM396.8 311.8H401.0V313.9H396.8ZM403.1 311.8H417.8V313.9H403.1ZM361.1 313.9H386.3V316.0H361.1ZM390.5 313.9H392.6V316.0H390.5ZM398.9 313.9H401.0V316.0H398.9ZM403.1 313.9H415.7V316.0H403.1ZM342.2 316.0H346.4V318.1H342.2ZM361.1 316.0H386.3V318.1H361.1ZM403.1 316.0H415.7V318.1H403.1ZM342.2 318.1H354.8V320.2H342.2ZM359.0 318.1H388.4V320.2H359.0ZM403.1 318.1H415.7V320.2H403.1ZM338.0 320.2H390.5V322.3H338.0ZM401.0 320.2H413.6V322.3H401.0ZM281.3 322.3H287.6V324.4H281.3ZM289.7 322.3H291.8V324.4H289.7ZM338.0 322.3H392.6V324.4H338.0ZM401.0 322.3H409.4V324.4H401.0ZM411.5 322.3H413.6V324.4H411.5ZM272.9 324.4H277.1V326.5H272.9ZM279.2 324.4H289.7V326.5H279.2ZM333.8 324.4H335.9V326.5H333.8ZM338.0 324.4H392.6V326.5H338.0ZM401.0 324.4H409.4V326.5H401.0ZM272.9 326.5H287.6V328.6H272.9ZM331.7 326.5H394.7V328.6H331.7ZM396.8 326.5H401.0V328.6H396.8ZM270.8 328.6H272.9V330.7H270.8ZM275.0 328.6H293.9V330.7H275.0ZM327.5 328.6H342.2V330.7H327.5ZM359.0 328.6H401.0V330.7H359.0ZM272.9 330.7H293.9V332.8H272.9ZM321.2 330.7H342.2V332.8H321.2ZM359.0 330.7H401.0V332.8H359.0ZM270.8 332.8H298.1V334.9H270.8ZM319.1 332.8H342.2V334.9H319.1ZM359.0 332.8H396.8V334.9H359.0ZM270.8 334.9H300.2V337.0H270.8ZM314.9 334.9H342.2V337.0H314.9ZM359.0 334.9H398.9V337.0H359.0ZM270.8 337.0H300.2V339.1H270.8ZM310.7 337.0H312.8V339.1H310.7ZM314.9 337.0H342.2V339.1H314.9ZM359.0 337.0H396.8V339.1H359.0ZM270.8 339.1H302.3V341.2H270.8ZM312.8 339.1H394.7V341.2H312.8ZM270.8 341.2H300.2V343.3H270.8ZM312.8 341.2H396.8V343.3H312.8ZM272.9 343.3H300.2V345.4H272.9ZM314.9 343.3H392.6V345.4H314.9ZM275.0 345.4H296.0V347.5H275.0ZM317.0 345.4H390.5V347.5H317.0ZM277.1 347.5H296.0V349.6H277.1ZM317.0 347.5H384.2V349.6H317.0ZM277.1 349.6H293.9V351.7H277.1ZM296.0 349.6H298.1V351.7H296.0ZM317.0 349.6H384.2V351.7H317.0ZM277.1 351.7H279.2V353.8H277.1ZM281.3 351.7H293.9V353.8H281.3ZM319.1 351.7H384.2V353.8H319.1ZM386.3 351.7H388.4V353.8H386.3ZM281.3 353.8H293.9V355.9H281.3ZM319.1 353.8H384.2V355.9H319.1ZM386.3 353.8H390.5V355.9H386.3ZM281.3 355.9H291.8V358.0H281.3ZM319.1 355.9H388.4V358.0H319.1ZM319.1 358.0H388.4V360.1H319.1ZM317.0 360.1H340.1V362.2H317.0ZM342.2 360.1H359.0V362.2H342.2ZM363.2 360.1H377.9V362.2H363.2ZM382.1 360.1H390.5V362.2H382.1ZM317.0 362.2H340.1V364.3H317.0ZM342.2 362.2H344.3V364.3H342.2ZM346.4 362.2H356.9V364.3H346.4ZM365.3 362.2H373.7V364.3H365.3ZM375.8 362.2H377.9V364.3H375.8ZM384.2 362.2H390.5V364.3H384.2ZM319.1 364.3H338.0V366.4H319.1ZM340.1 364.3H342.2V366.4H340.1ZM346.4 364.3H348.5V366.4H346.4ZM350.6 364.3H356.9V366.4H350.6ZM363.2 364.3H369.5V366.4H363.2ZM317.0 366.4H338.0V368.5H317.0ZM352.7 366.4H354.8V368.5H352.7ZM388.4 366.4H390.5V368.5H388.4ZM314.9 368.5H333.8V370.6H314.9ZM335.9 368.5H340.1V370.6H335.9ZM352.7 368.5H356.9V370.6H352.7ZM314.9 370.6H340.1V372.7H314.9ZM350.6 370.6H352.7V372.7H350.6ZM312.8 372.7H331.7V374.8H312.8ZM338.0 372.7H340.1V374.8H338.0ZM312.8 374.8H327.5V376.9H312.8ZM390.5 374.8H392.6V376.9H390.5ZM314.9 376.9H327.5V379.0H314.9ZM392.6 376.9H394.7V379.0H392.6ZM314.9 379.0H325.4V381.1H314.9ZM317.0 381.1H323.3V383.2H317.0ZM306.5 383.2H310.7V385.3H306.5ZM317.0 383.2H319.1V385.3H317.0ZM302.3 385.3H314.9V387.4H302.3ZM317.0 385.3H319.1V387.4H317.0ZM411.5 385.3H415.7V387.4H411.5ZM417.8 385.3H419.9V387.4H417.8ZM438.8 385.3H440.9V387.4H438.8ZM296.0 387.4H317.0V389.5H296.0ZM411.5 387.4H424.1V389.5H411.5ZM434.6 387.4H440.9V389.5H434.6ZM296.0 389.5H319.1V391.6H296.0ZM409.4 389.5H428.3V391.6H409.4ZM432.5 389.5H440.9V391.6H432.5ZM293.9 391.6H317.0V393.7H293.9ZM405.2 391.6H440.9V393.7H405.2ZM298.1 393.7H319.1V395.8H298.1ZM403.1 393.7H409.4V395.8H403.1ZM411.5 393.7H415.7V395.8H411.5ZM419.9 393.7H440.9V395.8H419.9ZM443.0 393.7H445.1V395.8H443.0ZM243.5 395.8H245.6V397.9H243.5ZM251.9 395.8H258.2V397.9H251.9ZM293.9 395.8H319.1V397.9H293.9ZM396.8 395.8H409.4V397.9H396.8ZM413.6 395.8H415.7V397.9H413.6ZM417.8 395.8H440.9V397.9H417.8ZM443.0 395.8H445.1V397.9H443.0ZM230.9 397.9H235.1V400.0H230.9ZM237.2 397.9H262.4V400.0H237.2ZM296.0 397.9H319.1V400.0H296.0ZM390.5 397.9H409.4V400.0H390.5ZM419.9 397.9H445.1V400.0H419.9ZM228.8 400.0H262.4V402.1H228.8ZM291.8 400.0H317.0V402.1H291.8ZM388.4 400.0H405.2V402.1H388.4ZM417.8 400.0H419.9V402.1H417.8ZM422.0 400.0H445.1V402.1H422.0ZM228.8 402.1H268.7V404.2H228.8ZM291.8 402.1H314.9V404.2H291.8ZM386.3 402.1H405.2V404.2H386.3ZM419.9 402.1H445.1V404.2H419.9ZM228.8 404.2H268.7V406.3H228.8ZM298.1 404.2H312.8V406.3H298.1ZM386.3 404.2H405.2V406.3H386.3ZM422.0 404.2H424.1V406.3H422.0ZM426.2 404.2H445.1V406.3H426.2ZM228.8 406.3H266.6V408.4H228.8ZM300.2 406.3H317.0V408.4H300.2ZM386.3 406.3H405.2V408.4H386.3ZM430.4 406.3H447.2V408.4H430.4ZM228.8 408.4H268.7V410.5H228.8ZM298.1 408.4H300.2V410.5H298.1ZM302.3 408.4H317.0V410.5H302.3ZM386.3 408.4H403.1V410.5H386.3ZM430.4 408.4H447.2V410.5H430.4ZM226.7 410.5H270.8V412.6H226.7ZM300.2 410.5H317.0V412.6H300.2ZM388.4 410.5H405.2V412.6H388.4ZM434.6 410.5H447.2V412.6H434.6ZM222.5 412.6H224.6V414.7H222.5ZM226.7 412.6H272.9V414.7H226.7ZM300.2 412.6H317.0V414.7H300.2ZM356.9 412.6H367.4V414.7H356.9ZM390.5 412.6H403.1V414.7H390.5ZM438.8 412.6H443.0V414.7H438.8ZM445.1 412.6H447.2V414.7H445.1ZM222.5 414.7H275.0V416.8H222.5ZM296.0 414.7H314.9V416.8H296.0ZM356.9 414.7H386.3V416.8H356.9ZM390.5 414.7H403.1V416.8H390.5ZM436.7 414.7H443.0V416.8H436.7ZM445.1 414.7H447.2V416.8H445.1ZM220.4 416.8H277.1V418.9H220.4ZM296.0 416.8H314.9V418.9H296.0ZM359.0 416.8H388.4V418.9H359.0ZM394.7 416.8H405.2V418.9H394.7ZM436.7 416.8H440.9V418.9H436.7ZM220.4 418.9H256.1V421.0H220.4ZM266.6 418.9H277.1V421.0H266.6ZM289.7 418.9H293.9V421.0H289.7ZM296.0 418.9H314.9V421.0H296.0ZM361.1 418.9H394.7V421.0H361.1ZM396.8 418.9H405.2V421.0H396.8ZM434.6 418.9H445.1V421.0H434.6ZM222.5 421.0H256.1V423.1H222.5ZM266.6 421.0H277.1V423.1H266.6ZM285.5 421.0H312.8V423.1H285.5ZM363.2 421.0H394.7V423.1H363.2ZM396.8 421.0H405.2V423.1H396.8ZM430.4 421.0H445.1V423.1H430.4ZM220.4 423.1H256.1V425.2H220.4ZM266.6 423.1H314.9V425.2H266.6ZM365.3 423.1H405.2V425.2H365.3ZM428.3 423.1H447.2V425.2H428.3ZM220.4 425.2H256.1V427.3H220.4ZM266.6 425.2H314.9V427.3H266.6ZM365.3 425.2H405.2V427.3H365.3ZM428.3 425.2H449.3V427.3H428.3ZM218.3 427.3H312.8V429.4H218.3ZM365.3 427.3H396.8V429.4H365.3ZM403.1 427.3H405.2V429.4H403.1ZM424.1 427.3H438.8V429.4H424.1ZM440.9 427.3H443.0V429.4H440.9ZM218.3 429.4H312.8V431.5H218.3ZM367.4 429.4H396.8V431.5H367.4ZM422.0 429.4H443.0V431.5H422.0ZM218.3 431.5H308.6V433.6H218.3ZM365.3 431.5H396.8V433.6H365.3ZM422.0 431.5H438.8V433.6H422.0ZM218.3 433.6H306.5V435.7H218.3ZM367.4 433.6H396.8V435.7H367.4ZM403.1 433.6H405.2V435.7H403.1ZM419.9 433.6H443.0V435.7H419.9ZM220.4 435.7H275.0V437.8H220.4ZM277.1 435.7H283.4V437.8H277.1ZM285.5 435.7H302.3V437.8H285.5ZM367.4 435.7H403.1V437.8H367.4ZM417.8 435.7H443.0V437.8H417.8ZM220.4 437.8H268.7V439.9H220.4ZM285.5 437.8H298.1V439.9H285.5ZM369.5 437.8H390.5V439.9H369.5ZM396.8 437.8H401.0V439.9H396.8ZM415.7 437.8H443.0V439.9H415.7ZM222.5 439.9H268.7V442.0H222.5ZM293.9 439.9H296.0V442.0H293.9ZM413.6 439.9H436.7V442.0H413.6ZM438.8 439.9H440.9V442.0H438.8ZM226.7 442.0H241.4V444.1H226.7ZM243.5 442.0H247.7V444.1H243.5ZM249.8 442.0H264.5V444.1H249.8ZM413.6 442.0H434.6V444.1H413.6ZM436.7 442.0H438.8V444.1H436.7ZM230.9 444.1H235.1V446.2H230.9ZM249.8 444.1H264.5V446.2H249.8ZM287.6 444.1H293.9V446.2H287.6ZM411.5 444.1H434.6V446.2H411.5ZM436.7 444.1H438.8V446.2H436.7ZM285.5 446.2H296.0V448.3H285.5ZM409.4 446.2H424.1V448.3H409.4ZM426.2 446.2H430.4V448.3H426.2ZM285.5 448.3H296.0V450.4H285.5ZM409.4 448.3H422.0V450.4H409.4ZM424.1 448.3H426.2V450.4H424.1ZM285.5 450.4H296.0V452.5H285.5ZM409.4 450.4H419.9V452.5H409.4ZM285.5 452.5H293.9V454.6H285.5ZM405.2 452.5H419.9V454.6H405.2ZM283.4 454.6H293.9V456.7H283.4ZM405.2 454.6H419.9V456.7H405.2ZM281.3 456.7H293.9V458.8H281.3ZM405.2 456.7H417.8V458.8H405.2ZM281.3 458.8H293.9V460.9H281.3ZM405.2 458.8H419.9V460.9H405.2ZM281.3 460.9H289.7V463.0H281.3ZM403.1 460.9H419.9V463.0H403.1ZM279.2 463.0H289.7V465.1H279.2ZM405.2 463.0H422.0V465.1H405.2ZM279.2 465.1H287.6V467.2H279.2ZM403.1 465.1H419.9V467.2H403.1ZM279.2 467.2H287.6V469.3H279.2ZM403.1 467.2H419.9V469.3H403.1ZM277.1 469.3H287.6V471.4H277.1ZM335.9 469.3H346.4V471.4H335.9ZM401.0 469.3H419.9V471.4H401.0ZM275.0 471.4H287.6V473.5H275.0ZM331.7 471.4H344.3V473.5H331.7ZM398.9 471.4H419.9V473.5H398.9ZM266.6 473.5H287.6V475.6H266.6ZM327.5 473.5H340.1V475.6H327.5ZM396.8 473.5H417.8V475.6H396.8ZM262.4 475.6H287.6V477.7H262.4ZM327.5 475.6H338.0V477.7H327.5ZM396.8 475.6H409.4V477.7H396.8ZM411.5 475.6H417.8V477.7H411.5ZM260.3 477.7H283.4V479.8H260.3ZM285.5 477.7H289.7V479.8H285.5ZM321.2 477.7H333.8V479.8H321.2ZM394.7 477.7H411.5V479.8H394.7ZM258.2 479.8H268.7V481.9H258.2ZM272.9 479.8H275.0V481.9H272.9ZM277.1 479.8H281.3V481.9H277.1ZM285.5 479.8H289.7V481.9H285.5ZM321.2 479.8H329.6V481.9H321.2ZM392.6 479.8H407.3V481.9H392.6ZM409.4 479.8H411.5V481.9H409.4ZM258.2 481.9H266.6V484.0H258.2ZM321.2 481.9H329.6V484.0H321.2ZM392.6 481.9H409.4V484.0H392.6ZM258.2 484.0H266.6V486.1H258.2ZM325.4 484.0H327.5V486.1H325.4ZM390.5 484.0H407.3V486.1H390.5ZM256.1 486.1H264.5V488.2H256.1ZM388.4 486.1H405.2V488.2H388.4ZM254.0 488.2H264.5V490.3H254.0ZM386.3 488.2H401.0V490.3H386.3ZM251.9 490.3H264.5V492.4H251.9ZM266.6 490.3H268.7V492.4H266.6ZM384.2 490.3H398.9V492.4H384.2ZM249.8 492.4H264.5V494.5H249.8ZM382.1 492.4H398.9V494.5H382.1ZM249.8 494.5H266.6V496.6H249.8ZM380.0 494.5H396.8V496.6H380.0ZM249.8 496.6H270.8V498.7H249.8ZM344.3 496.6H346.4V498.7H344.3ZM382.1 496.6H396.8V498.7H382.1ZM251.9 498.7H275.0V500.8H251.9ZM382.1 498.7H396.8V500.8H382.1ZM254.0 500.8H279.2V502.9H254.0ZM346.4 500.8H354.8V502.9H346.4ZM382.1 500.8H396.8V502.9H382.1ZM256.1 502.9H258.2V505.0H256.1ZM260.3 502.9H270.8V505.0H260.3ZM346.4 502.9H354.8V505.0H346.4ZM373.7 502.9H375.8V505.0H373.7ZM377.9 502.9H380.0V505.0H377.9ZM384.2 502.9H394.7V505.0H384.2ZM262.4 505.0H270.8V507.1H262.4ZM346.4 505.0H354.8V507.1H346.4ZM371.6 505.0H394.7V507.1H371.6ZM266.6 507.1H272.9V509.2H266.6ZM346.4 507.1H354.8V509.2H346.4ZM371.6 507.1H380.0V509.2H371.6ZM382.1 507.1H394.7V509.2H382.1ZM268.7 509.2H270.8V511.3H268.7ZM348.5 509.2H354.8V511.3H348.5ZM377.9 509.2H390.5V511.3H377.9ZM346.4 511.3H354.8V513.4H346.4ZM384.2 511.3H386.3V513.4H384.2Z"/><path fill="#ffffff" d="M388.4 309.7H396.8V311.8H388.4ZM384.2 311.8H388.4V313.9H384.2ZM390.5 311.8H396.8V313.9H390.5ZM401.0 311.8H403.1V313.9H401.0ZM386.3 313.9H390.5V316.0H386.3ZM392.6 313.9H398.9V316.0H392.6ZM401.0 313.9H403.1V316.0H401.0ZM386.3 316.0H403.1V318.1H386.3ZM388.4 318.1H403.1V320.2H388.4ZM390.5 320.2H401.0V322.3H390.5ZM392.6 322.3H401.0V324.4H392.6ZM392.6 324.4H401.0V326.5H392.6ZM394.7 326.5H396.8V328.6H394.7ZM342.2 328.6H359.0V330.7H342.2ZM342.2 330.7H359.0V332.8H342.2ZM342.2 332.8H359.0V334.9H342.2ZM342.2 334.9H359.0V337.0H342.2ZM342.2 337.0H359.0V339.1H342.2ZM340.1 360.1H342.2V362.2H340.1ZM359.0 360.1H363.2V362.2H359.0ZM377.9 360.1H382.1V362.2H377.9ZM340.1 362.2H342.2V364.3H340.1ZM344.3 362.2H346.4V364.3H344.3ZM356.9 362.2H365.3V364.3H356.9ZM373.7 362.2H375.8V364.3H373.7ZM377.9 362.2H384.2V364.3H377.9ZM338.0 364.3H340.1V366.4H338.0ZM342.2 364.3H346.4V366.4H342.2ZM348.5 364.3H350.6V366.4H348.5ZM356.9 364.3H363.2V366.4H356.9ZM369.5 364.3H388.4V366.4H369.5ZM338.0 366.4H352.7V368.5H338.0ZM354.8 366.4H388.4V368.5H354.8ZM333.8 368.5H335.9V370.6H333.8ZM340.1 368.5H352.7V370.6H340.1ZM356.9 368.5H388.4V370.6H356.9ZM340.1 370.6H350.6V372.7H340.1ZM352.7 370.6H390.5V372.7H352.7ZM331.7 372.7H338.0V374.8H331.7ZM340.1 372.7H390.5V374.8H340.1ZM327.5 374.8H390.5V376.9H327.5ZM327.5 376.9H392.6V379.0H327.5ZM325.4 379.0H394.7V381.1H325.4ZM323.3 381.1H394.7V383.2H323.3ZM314.9 383.2H317.0V385.3H314.9ZM319.1 383.2H398.9V385.3H319.1ZM319.1 385.3H396.8V387.4H319.1ZM317.0 387.4H398.9V389.5H317.0ZM319.1 389.5H398.9V391.6H319.1ZM317.0 391.6H398.9V393.7H317.0ZM319.1 393.7H396.8V395.8H319.1ZM409.4 393.7H411.5V395.8H409.4ZM415.7 393.7H419.9V395.8H415.7ZM319.1 395.8H396.8V397.9H319.1ZM409.4 395.8H413.6V397.9H409.4ZM415.7 395.8H417.8V397.9H415.7ZM319.1 397.9H390.5V400.0H319.1ZM409.4 397.9H419.9V400.0H409.4ZM317.0 400.0H388.4V402.1H317.0ZM405.2 400.0H417.8V402.1H405.2ZM419.9 400.0H422.0V402.1H419.9ZM314.9 402.1H386.3V404.2H314.9ZM405.2 402.1H419.9V404.2H405.2ZM312.8 404.2H386.3V406.3H312.8ZM405.2 404.2H422.0V406.3H405.2ZM424.1 404.2H426.2V406.3H424.1ZM317.0 406.3H386.3V408.4H317.0ZM405.2 406.3H430.4V408.4H405.2ZM317.0 408.4H386.3V410.5H317.0ZM403.1 408.4H430.4V410.5H403.1ZM317.0 410.5H388.4V412.6H317.0ZM405.2 410.5H434.6V412.6H405.2ZM319.1 412.6H356.9V414.7H319.1ZM367.4 412.6H390.5V414.7H367.4ZM403.1 412.6H438.8V414.7H403.1ZM317.0 414.7H356.9V416.8H317.0ZM386.3 414.7H390.5V416.8H386.3ZM403.1 414.7H436.7V416.8H403.1ZM317.0 416.8H359.0V418.9H317.0ZM388.4 416.8H394.7V418.9H388.4ZM405.2 416.8H436.7V418.9H405.2ZM256.1 418.9H266.6V421.0H256.1ZM317.0 418.9H361.1V421.0H317.0ZM394.7 418.9H396.8V421.0H394.7ZM405.2 418.9H434.6V421.0H405.2ZM256.1 421.0H266.6V423.1H256.1ZM317.0 421.0H363.2V423.1H317.0ZM394.7 421.0H396.8V423.1H394.7ZM405.2 421.0H430.4V423.1H405.2ZM256.1 423.1H266.6V425.2H256.1ZM319.1 423.1H365.3V425.2H319.1ZM405.2 423.1H428.3V425.2H405.2ZM256.1 425.2H266.6V427.3H256.1ZM314.9 425.2H365.3V427.3H314.9ZM405.2 425.2H428.3V427.3H405.2ZM312.8 427.3H365.3V429.4H312.8ZM396.8 427.3H403.1V429.4H396.8ZM411.5 427.3H424.1V429.4H411.5ZM312.8 429.4H367.4V431.5H312.8ZM396.8 429.4H403.1V431.5H396.8ZM407.3 429.4H422.0V431.5H407.3ZM308.6 431.5H365.3V433.6H308.6ZM396.8 431.5H403.1V433.6H396.8ZM407.3 431.5H422.0V433.6H407.3ZM306.5 433.6H367.4V435.7H306.5ZM396.8 433.6H403.1V435.7H396.8ZM407.3 433.6H419.9V435.7H407.3ZM302.3 435.7H367.4V437.8H302.3ZM405.2 435.7H417.8V437.8H405.2ZM302.3 437.8H369.5V439.9H302.3ZM405.2 437.8H415.7V439.9H405.2ZM300.2 439.9H396.8V442.0H300.2ZM398.9 439.9H413.6V442.0H398.9ZM300.2 442.0H413.6V444.1H300.2ZM298.1 444.1H411.5V446.2H298.1ZM296.0 446.2H409.4V448.3H296.0ZM296.0 448.3H409.4V450.4H296.0ZM296.0 450.4H409.4V452.5H296.0ZM293.9 452.5H405.2V454.6H293.9ZM293.9 454.6H405.2V456.7H293.9ZM293.9 456.7H405.2V458.8H293.9ZM296.0 458.8H405.2V460.9H296.0ZM293.9 460.9H403.1V463.0H293.9ZM296.0 463.0H405.2V465.1H296.0ZM298.1 465.1H403.1V467.2H298.1ZM296.0 467.2H403.1V469.3H296.0ZM296.0 469.3H335.9V471.4H296.0ZM346.4 469.3H401.0V471.4H346.4ZM296.0 471.4H331.7V473.5H296.0ZM344.3 471.4H398.9V473.5H344.3ZM291.8 473.5H327.5V475.6H291.8ZM340.1 473.5H396.8V475.6H340.1ZM287.6 475.6H289.7V477.7H287.6ZM293.9 475.6H327.5V477.7H293.9ZM338.0 475.6H396.8V477.7H338.0ZM283.4 477.7H285.5V479.8H283.4ZM289.7 477.7H291.8V479.8H289.7ZM293.9 477.7H321.2V479.8H293.9ZM333.8 477.7H394.7V479.8H333.8ZM281.3 479.8H285.5V481.9H281.3ZM291.8 479.8H321.2V481.9H291.8ZM329.6 479.8H392.6V481.9H329.6ZM281.3 481.9H321.2V484.0H281.3ZM329.6 481.9H392.6V484.0H329.6ZM277.1 484.0H325.4V486.1H277.1ZM327.5 484.0H390.5V486.1H327.5ZM264.5 486.1H266.6V488.2H264.5ZM272.9 486.1H388.4V488.2H272.9ZM266.6 488.2H386.3V490.3H266.6ZM268.7 490.3H384.2V492.4H268.7ZM266.6 492.4H382.1V494.5H266.6ZM266.6 494.5H380.0V496.6H266.6ZM270.8 496.6H344.3V498.7H270.8ZM346.4 496.6H382.1V498.7H346.4ZM275.0 498.7H382.1V500.8H275.0ZM279.2 500.8H346.4V502.9H279.2ZM354.8 500.8H382.1V502.9H354.8ZM270.8 502.9H346.4V505.0H270.8ZM354.8 502.9H373.7V505.0H354.8ZM375.8 502.9H377.9V505.0H375.8ZM380.0 502.9H384.2V505.0H380.0ZM270.8 505.0H346.4V507.1H270.8ZM354.8 505.0H371.6V507.1H354.8ZM272.9 507.1H346.4V509.2H272.9ZM354.8 507.1H371.6V509.2H354.8ZM270.8 509.2H348.5V511.3H270.8ZM354.8 509.2H371.6V511.3H354.8ZM272.9 511.3H346.4V513.4H272.9ZM354.8 511.3H371.6V513.4H354.8ZM275.0 513.4H369.5V515.5H275.0ZM279.2 515.5H369.5V517.6H279.2ZM277.1 517.6H369.5V519.7H277.1ZM277.1 519.7H369.5V521.8H277.1ZM279.2 521.8H367.4V523.9H279.2ZM279.2 523.9H363.2V526.0H279.2ZM279.2 526.0H361.1V528.1H279.2ZM279.2 528.1H359.0V530.2H279.2ZM279.2 530.2H359.0V532.3H279.2ZM279.2 532.3H359.0V534.4H279.2ZM279.2 534.4H359.0V536.5H279.2ZM279.2 536.5H359.0V538.6H279.2ZM281.3 538.6H361.1V540.7H281.3ZM281.3 540.7H361.1V542.8H281.3ZM363.2 540.7H367.4V542.8H363.2ZM281.3 542.8H369.5V544.9H281.3ZM281.3 544.9H369.5V547.0H281.3ZM283.4 547.0H369.5V549.1H283.4ZM283.4 549.1H371.6V551.2H283.4ZM283.4 551.2H371.6V553.3H283.4ZM285.5 553.3H373.7V555.4H285.5ZM285.5 555.4H373.7V557.5H285.5ZM287.6 557.5H377.9V559.6H287.6ZM287.6 559.6H375.8V561.7H287.6ZM287.6 561.7H375.8V563.8H287.6ZM289.7 563.8H365.3V565.9H289.7ZM289.7 565.9H365.3V568.0H289.7ZM291.8 568.0H365.3V570.1H291.8ZM291.8 570.1H319.1V572.2H291.8ZM325.4 570.1H369.5V572.2H325.4ZM298.1 572.2H319.1V574.3H298.1ZM325.4 572.2H371.6V574.3H325.4ZM298.1 574.3H319.1V576.4H298.1ZM325.4 574.3H373.7V576.4H325.4ZM298.1 576.4H319.1V578.5H298.1ZM325.4 576.4H373.7V578.5H325.4ZM298.1 578.5H319.1V580.6H298.1ZM327.5 578.5H371.6V580.6H327.5ZM298.1 580.6H319.1V582.7H298.1ZM327.5 580.6H329.6V582.7H327.5ZM331.7 580.6H371.6V582.7H331.7ZM298.1 582.7H319.1V584.8H298.1ZM331.7 582.7H371.6V584.8H331.7ZM298.1 584.8H314.9V586.9H298.1ZM331.7 584.8H369.5V586.9H331.7ZM298.1 586.9H300.2V589.0H298.1ZM304.4 586.9H312.8V589.0H304.4ZM333.8 586.9H369.5V589.0H333.8ZM304.4 589.0H306.5V591.1H304.4ZM333.8 589.0H367.4V591.1H333.8ZM333.8 591.1H363.2V593.2H333.8ZM333.8 593.2H359.0V595.3H333.8ZM333.8 595.3H354.8V597.4H333.8ZM308.6 597.4H319.1V599.5H308.6ZM333.8 597.4H350.6V599.5H333.8ZM308.6 599.5H319.1V601.6H308.6ZM335.9 599.5H348.5V601.6H335.9ZM310.7 601.6H319.1V603.7H310.7ZM335.9 601.6H346.4V603.7H335.9ZM310.7 603.7H312.8V605.8H310.7ZM342.2 603.7H344.3V605.8H342.2ZM319.1 610.0H331.7V612.1H319.1ZM319.1 612.1H331.7V614.2H319.1ZM319.1 614.2H331.7V616.3H319.1Z"/><path fill="#afbfd2" d="M270.8 517.6H277.1V519.7H270.8ZM270.8 519.7H277.1V521.8H270.8ZM272.9 521.8H277.1V523.9H272.9ZM272.9 523.9H277.1V526.0H272.9ZM367.4 523.9H369.5V526.0H367.4ZM272.9 526.0H279.2V528.1H272.9ZM361.1 526.0H371.6V528.1H361.1ZM275.0 528.1H279.2V530.2H275.0ZM359.0 528.1H380.0V530.2H359.0ZM275.0 530.2H279.2V532.3H275.0ZM359.0 530.2H380.0V532.3H359.0ZM277.1 532.3H279.2V534.4H277.1ZM359.0 532.3H388.4V534.4H359.0ZM359.0 534.4H386.3V536.5H359.0ZM359.0 536.5H384.2V538.6H359.0ZM361.1 538.6H384.2V540.7H361.1ZM361.1 540.7H363.2V542.8H361.1ZM367.4 540.7H369.5V542.8H367.4ZM375.8 540.7H382.1V542.8H375.8ZM375.8 542.8H382.1V544.9H375.8ZM365.3 563.8H375.8V565.9H365.3ZM365.3 565.9H373.7V568.0H365.3ZM365.3 568.0H373.7V570.1H365.3ZM369.5 570.1H371.6V572.2H369.5ZM291.8 572.2H298.1V574.3H291.8ZM371.6 572.2H373.7V574.3H371.6ZM291.8 574.3H298.1V576.4H291.8ZM293.9 576.4H298.1V578.5H293.9ZM293.9 578.5H298.1V580.6H293.9ZM293.9 580.6H298.1V582.7H293.9ZM293.9 582.7H298.1V584.8H293.9ZM296.0 584.8H298.1V586.9H296.0Z"/></svg><svg style="left:0;top:0" width="683" height="721" viewBox="0 0 683 721"><g fill="none" stroke="rgba(190,50,50,.56)" stroke-width="1.2"><path d="M335.6 0V155" stroke-width="2"/><circle cx="335.6" cy="155" r="75.6"/><circle cx="335.6" cy="306.5" r="75.6"/><path d="M260.7 310L335.4 234.5L410 309M335.5 234.5V306"/></g><circle cx="335.6" cy="155" r="18.6" fill="rgba(190,60,60,.5)"/><circle cx="335.6" cy="306.4" r="19" fill="rgba(240,70,50,.5)"/><circle cx="335.6" cy="612.4" r="17.3" fill="rgba(255,255,255,.22)"/><rect x="220.60000000000002" y="436" width="229" height="75.7" fill="none" stroke="rgba(255,255,255,.27)" stroke-width="1.6"/><g fill="none" stroke="rgba(165,165,165,.72)" stroke-width="1.1"><rect x="260.2" y="398.6" width="150" height="151"/><rect x="260.2" y="535.2" width="152.200" height="150"/></g></svg></div>
<div style="left:184.7px;top:790.3px;width:22.5px;height:15.5px;background:#121212;box-shadow:0 0 0 1.2px #252525;border-radius:1px;"></div>
<svg style="left:190px;top:793px" width="11" height="10" viewBox="0 0 11 10"><rect x=".5" y="1" width="1.6" height="8" fill="#e6e6e6"/><path d="M6.500 1V9L2.300 5Z" fill="#e6e6e6"/><path d="M10.700 1V9L6.500 5Z" fill="#e6e6e6"/></svg>
<div style="left:212px;top:790.3px;width:22.5px;height:15.5px;background:#121212;box-shadow:0 0 0 1.2px #252525;border-radius:1px;"></div>
<svg style="left:219px;top:794px" width="8" height="9" viewBox="0 0 8 9"><path d="M.8 .5L7.200 4.500.8 8.500Z" fill="#e6e6e6"/></svg>
<div style="left:243.5px;top:790.3px;width:539.5px;height:15.5px;background:#121212;box-shadow:0 0 0 1.2px #252525;border-radius:1px;"></div>
<div style="left:297px;top:803px;width:1px;height:4px;background:#8a8a8a;"></div>
<span class="t" style="top:791.6px;left:147px;width:300px;text-align:center;color:#858585;font-size:8.6px;-webkit-text-stroke:.2px currentColor;">1s</span>
<div style="left:351px;top:803px;width:1px;height:4px;background:#8a8a8a;"></div>
<span class="t" style="top:791.6px;left:201px;width:300px;text-align:center;color:#858585;font-size:8.6px;-webkit-text-stroke:.2px currentColor;">2s</span>
<div style="left:405px;top:803px;width:1px;height:4px;background:#8a8a8a;"></div>
<span class="t" style="top:791.6px;left:255px;width:300px;text-align:center;color:#858585;font-size:8.6px;-webkit-text-stroke:.2px currentColor;">3s</span>
<div style="left:459px;top:803px;width:1px;height:4px;background:#8a8a8a;"></div>
<span class="t" style="top:791.6px;left:309px;width:300px;text-align:center;color:#858585;font-size:8.6px;-webkit-text-stroke:.2px currentColor;">4s</span>
<div style="left:513px;top:803px;width:1px;height:4px;background:#8a8a8a;"></div>
<span class="t" style="top:791.6px;left:363px;width:300px;text-align:center;color:#858585;font-size:8.6px;-webkit-text-stroke:.2px currentColor;">5s</span>
<div style="left:567px;top:803px;width:1px;height:4px;background:#8a8a8a;"></div>
<span class="t" style="top:791.6px;left:417px;width:300px;text-align:center;color:#858585;font-size:8.6px;-webkit-text-stroke:.2px currentColor;">6s</span>
<div style="left:621px;top:803px;width:1px;height:4px;background:#8a8a8a;"></div>
<span class="t" style="top:791.6px;left:471px;width:300px;text-align:center;color:#858585;font-size:8.6px;-webkit-text-stroke:.2px currentColor;">7s</span>
<div style="left:675px;top:803px;width:1px;height:4px;background:#8a8a8a;"></div>
<span class="t" style="top:791.6px;left:525px;width:300px;text-align:center;color:#858585;font-size:8.6px;-webkit-text-stroke:.2px currentColor;">8s</span>
<div style="left:729px;top:803px;width:1px;height:4px;background:#8a8a8a;"></div>
<span class="t" style="top:791.6px;left:579px;width:300px;text-align:center;color:#858585;font-size:8.6px;-webkit-text-stroke:.2px currentColor;">9s</span>
<div style="left:489px;top:798px;width:2px;height:9px;background:#e0e0e0;"></div>
<div style="left:792.5px;top:790.3px;width:32.5px;height:15.5px;background:#121212;box-shadow:0 0 0 1.2px #252525;border-radius:1px;"></div>
<span class="t" style="top:791.6px;left:659px;width:300px;text-align:center;">10.0 s</span>
<div style="left:832.5px;top:790.3px;width:31px;height:15.5px;background:#121212;box-shadow:0 0 0 1.2px #252525;border-radius:1px;"></div>
<span class="t" style="top:791.6px;left:698px;width:300px;text-align:center;">1.0x</span>
<div style="left:882px;top:65px;width:41.5px;height:15.6px;background:#131313;box-shadow:0 0 0 1.2px #252525;border-radius:1px;"></div>
<svg style="left:889.2px;top:69px" width="8" height="8" viewBox="0 0 8 8"><path d="M4.0 .3V7.7M.3 4.0H7.7" stroke="#e6e6e6" stroke-width="1.9" fill="none"/></svg>
<span class="t" style="top:66.6px;left:903.2px;">Add</span>
<div style="left:929.5px;top:65px;width:58.5px;height:15.6px;background:#131313;box-shadow:0 0 0 1.2px #252525;border-radius:1px;"></div>
<svg style="left:936.3px;top:67.5px" width="7.6" height="9.6" viewBox="0 0 9 11"><path d="M.3 1.100H8.700V2.200H.3Z" fill="#e6e6e6"/><path d="M3 .2H6V1.300H3Z" fill="#e6e6e6"/><path d="M1 2.800H8L7.700 10a.7.7 0 0 1-.7.600H2a.7.7 0 0 1-.7-.600Z" fill="#e6e6e6"/></svg>
<span class="t" style="top:66.6px;left:949.7px;">Remove</span>
<div style="left:993.2px;top:65px;width:60.5px;height:15.6px;background:#131313;box-shadow:0 0 0 1.2px #252525;border-radius:1px;"></div>
<svg style="left:1000.3px;top:69px" width="8" height="7.6" viewBox="0 0 8 7.6"><path d="M4 1.200V7.600" stroke="#e6e6e6" stroke-width="1.900"/><path d="M.8 4.400L4 1.200 7.200 4.400" fill="none" stroke="#e6e6e6" stroke-width="1.900"/></svg>
<span class="t" style="top:66.6px;left:1014px;">Move up</span>
<div style="left:1059.5px;top:65px;width:73.5px;height:15.6px;background:#131313;box-shadow:0 0 0 1.2px #252525;border-radius:1px;"></div>
<svg style="left:1066.3px;top:69.3px" width="8" height="7.6" viewBox="0 0 8 7.6"><path d="M4 0V6.400" stroke="#e6e6e6" stroke-width="1.900"/><path d="M.8 3.200L4 6.400 7.200 3.200" fill="none" stroke="#e6e6e6" stroke-width="1.900"/></svg>
<span class="t" style="top:66.6px;left:1080.3px;">Move down</span>
<div style="left:882px;top:85.5px;width:557px;height:120.5px;background:#181818;box-shadow:inset 0 0 0 1px #262626;border-radius:2px;"></div>
<div style="left:883px;top:101.5px;width:555px;height:15px;background:#0b0b0b;"></div>
<svg style="left:889px;top:89.2px" width="9" height="9" viewBox="0 0 9 9"><path d="M4.500 .6C6.200 2.600 7.900 4 7.900 5.600A3.400 3.100 0 0 1 1.100 5.600C1.100 4 2.800 2.600 4.500 .6Z" fill="none" stroke="#e6e6e6" stroke-width="1.200"/><path d="M1.200 5.400H7.800A3.300 3.100 0 0 1 1.200 5.400Z" fill="#e6e6e6"/></svg>
<span class="t" style="top:87.7px;left:904.2px;">Alpha threshold</span>
<svg style="left:888.8px;top:104.2px" width="9.5" height="9" viewBox="0 0 9.5 9"><path d="M4.700 .3A4.400 4.200 0 1 0 4.700 8.700C5.800 8.700 5.800 7.700 5.400 7.100 5 6.500 5.400 5.800 6.200 5.800H7.600C8.700 5.800 9.200 5.100 9.200 4.300 9.200 2 7.100 .3 4.700 .3Z" fill="#e6e6e6"/><g fill="#151515"><circle cx="2.500" cy="4.700" r=".8"/><circle cx="3.400" cy="2.600" r=".8"/><circle cx="5.700" cy="2.200" r=".8"/><circle cx="7.400" cy="3.700" r=".8"/></g></svg>
<span class="t" style="top:102.7px;left:904.2px;">Palette &amp; dithering</span>
<svg style="left:889px;top:119px" width="9" height="9" viewBox="0 0 9 9"><path d="M4.500 .9L5.600 3.400 8.300 3.700 6.300 5.500 6.900 8.100 4.500 6.700 2.100 8.100 2.700 5.500 .7 3.700 3.400 3.400Z" fill="none" stroke="#e6e6e6" stroke-width="1.100" stroke-linejoin="round"/></svg>
<span class="t" style="top:117.8px;left:904.2px;">Outline</span>
<svg style="left:1416px;top:89.4px" width="12" height="8" viewBox="0 0 12 8"><path d="M.4 4C2 1.3 4 .4 6 .4S10 1.3 11.6 4C10 6.7 8 7.6 6 7.6S2 6.7 .4 4Z" fill="#9a9a9a"/><circle cx="6" cy="4" r="2.6" fill="#151515"/><circle cx="6" cy="4" r="1.5" fill="#9a9a9a"/></svg>
<svg style="left:1416px;top:104.4px" width="12" height="8" viewBox="0 0 12 8"><path d="M.4 4C2 1.3 4 .4 6 .4S10 1.3 11.6 4C10 6.7 8 7.6 6 7.6S2 6.7 .4 4Z" fill="#9a9a9a"/><circle cx="6" cy="4" r="2.6" fill="#151515"/><circle cx="6" cy="4" r="1.5" fill="#9a9a9a"/></svg>
<svg style="left:1416px;top:119.5px" width="12" height="8" viewBox="0 0 12 8"><path d="M.4 4C2 1.3 4 .4 6 .4S10 1.3 11.6 4C10 6.7 8 7.6 6 7.6S2 6.7 .4 4Z" fill="#9a9a9a"/><circle cx="6" cy="4" r="2.6" fill="#151515"/><circle cx="6" cy="4" r="1.5" fill="#9a9a9a"/></svg>
<div style="left:882px;top:211px;width:556px;height:1px;background:#242424;"></div>
<span class="t" style="top:221.8px;left:881px;">Dithering</span>
<div style="left:985px;top:221px;width:452px;height:15px;background:#121212;box-shadow:0 0 0 1.2px #252525;border-radius:1px;"></div>
<span class="t" style="top:221.8px;left:1061.5px;width:300px;text-align:center;">0%</span>
<span class="t" style="top:243px;left:881px;">Palette</span>
<div style="left:984px;top:241px;width:447px;height:89px;background:#1a1a1a;box-shadow:inset 0 0 0 1px #272727;border-radius:2px;"></div>
<div style="left:1431px;top:242.5px;width:5px;height:86.5px;background:#2b2b2b;border-radius:2.5px;"></div>
<div style="left:990px;top:247px;width:17px;height:17px;background:#e4a672;border-radius:2px;"></div>
<div style="left:1011px;top:247px;width:17px;height:17px;background:#b86f50;border-radius:2px;"></div>
<div style="left:1032px;top:247px;width:17px;height:17px;background:#743f39;border-radius:2px;"></div>
<div style="left:1053px;top:247px;width:17px;height:17px;background:#3f2832;border-radius:2px;"></div>
<div style="left:1074px;top:247px;width:17px;height:17px;background:#9e2835;border-radius:2px;"></div>
<div style="left:1095px;top:247px;width:17px;height:17px;background:#e53b44;border-radius:2px;"></div>
<div style="left:1116px;top:247px;width:17px;height:17px;background:#fb922b;border-radius:2px;"></div>
<div style="left:1137px;top:247px;width:17px;height:17px;background:#ffe762;border-radius:2px;"></div>
<div style="left:1159px;top:247px;width:17px;height:17px;background:#63c64d;border-radius:2px;"></div>
<div style="left:1180px;top:247px;width:17px;height:17px;background:#327345;border-radius:2px;"></div>
<div style="left:1201px;top:247px;width:17px;height:17px;background:#193d3f;border-radius:2px;"></div>
<div style="left:1222px;top:247px;width:17px;height:17px;background:#4f6781;border-radius:2px;"></div>
<div style="left:1243px;top:247px;width:17px;height:17px;background:#afbfd2;border-radius:2px;"></div>
<div style="left:1264px;top:247px;width:17px;height:17px;background:#ffffff;border-radius:2px;"></div>
<div style="left:1285px;top:247px;width:17px;height:17px;background:#2ce8f4;border-radius:2px;"></div>
<div style="left:1306px;top:247px;width:17px;height:17px;background:#0484d1;border-radius:2px;"></div>
<div style="left:1330px;top:246px;width:18px;height:18px;background:#141414;border-radius:2px;"></div>
<svg style="left:1334px;top:250px" width="9" height="9" viewBox="0 0 9 9"><path d="M4.5 .3V8.7M.3 4.5H8.7" stroke="#e6e6e6" stroke-width="1.9" fill="none"/></svg>
<div style="left:985.7px;top:335.6px;width:20px;height:15px;background:#131313;box-shadow:0 0 0 1.2px #252525;border-radius:1px;"></div>
<svg style="left:990px;top:338px" width="12" height="9" viewBox="0 0 12 9"><path d="M0.5 7.5V1.2a.7.7 0 0 1 .7-.7H4l1 1.2H8.8a.7.7 0 0 1 .7.7V3H3L.5 7.5Z" fill="#e6e6e6"/><path d="M3.2 3.8H11.6L9.3 8.5H.8Z" fill="#e6e6e6"/></svg>
<div style="left:1012.6px;top:335.6px;width:20.3px;height:15px;background:#131313;box-shadow:0 0 0 1.2px #252525;border-radius:1px;"></div>
<svg style="left:1017px;top:338px" width="12" height="10" viewBox="0 0 12 10"><path d="M6.800 .8L11 5 7.200 8.800H3.600L1 6.200Z" fill="#e6e6e6"/><path d="M3.800 3.600L8 7.800" stroke="#131313" stroke-width="1"/><path d="M3.200 5L6.400 8.200H3.800L1.800 6.200Z" fill="#131313" opacity=".0"/></svg>
<div style="left:1039.5px;top:335.6px;width:20.3px;height:15px;background:#131313;box-shadow:0 0 0 1.2px #252525;border-radius:1px;"></div>
<svg style="left:1044.5px;top:336.5px" width="10" height="12" viewBox="0 0 10 12"><rect x="1" y="2" width="8" height="9.200" rx="1" fill="none" stroke="#bdbdbd" stroke-width="1.200"/><rect x="3" y=".6" width="4" height="2.400" rx=".6" fill="#bdbdbd"/></svg>
<div style="left:1066px;top:335.6px;width:370.5px;height:15px;background:#131313;box-shadow:0 0 0 1.2px #252525;border-radius:1px;"></div>
<span class="t" style="top:336.2px;left:1069.5px;">Preset</span>
<svg style="left:1424px;top:338.5px" width="10" height="10" viewBox="0 0 10 10"><path d="M.3 .8H9.7L5 8.6Z" fill="#e6e6e6"/></svg>
<div style="left:877px;top:503px;width:568px;height:1px;background:#262626;"></div>
<div style="left:877px;top:504px;width:568px;height:17px;background:#111111;"></div>
<div style="left:765px;top:347.4px;width:483px;height:381.3px;background:#1c1c1c;border-radius:2px;box-shadow:inset 0 0 0 1px #222222;"></div><div style="left:765.5px;top:348px;width:482px;height:16px;background:#0e0e0e;border-radius:2px 2px 0 0;"></div><svg style="left:771px;top:351.5px" width="10" height="10" viewBox="0 0 10 10"><path d="M.3 .8H9.7L5 8.6Z" fill="#e6e6e6"/></svg><svg style="left:788px;top:352.3px" width="9.6" height="6.4" viewBox="0 0 11 7"><rect x="0" y="0" width="7.400" height="7" rx="1" fill="#e6e6e6"/><path d="M7.400 2.300L11 0V7L7.400 4.700Z" fill="#e6e6e6"/></svg><span class="t" style="top:349.5px;left:802.5px;">Render</span><svg style="left:1232px;top:351px" width="10" height="10" viewBox="0 0 10 10"><path d="M1 1L9 9M9 1L1 9" stroke="#e6e6e6" stroke-width="1.1" fill="none"/></svg><div class="chk" style="left:771px;top:372px;width:180px;height:180px;overflow:hidden;background-size:18px 18px"><svg style="left:0;top:0" width="180" height="180" viewBox="0 0 180 180" shape-rendering="crispEdges"><path fill="#000000" d="M108.3 21.1H109.7V22.5H108.3ZM90.0 23.9H91.4V25.3H90.0ZM90.0 26.7H91.4V28.1H90.0ZM81.6 33.8H83.0V35.2H81.6ZM75.9 35.2H77.3V36.6H75.9ZM78.8 35.2H81.6V36.6H78.8ZM83.0 35.2H84.4V36.6H83.0ZM81.6 36.6H83.0V38.0H81.6ZM95.6 36.6H97.0V38.0H95.6ZM98.4 36.6H99.8V38.0H98.4ZM112.5 36.6H113.9V38.0H112.5ZM115.3 36.6H116.7V38.0H115.3ZM75.9 38.0H77.3V39.4H75.9ZM78.8 38.0H80.2V39.4H78.8ZM84.4 38.0H85.8V39.4H84.4ZM97.0 38.0H99.8V39.4H97.0ZM108.3 38.0H109.7V39.4H108.3ZM84.4 39.4H87.2V40.8H84.4ZM106.9 39.4H108.3V40.8H106.9ZM109.7 39.4H111.1V40.8H109.7ZM112.5 39.4H113.9V40.8H112.5ZM81.6 42.2H83.0V43.6H81.6ZM81.6 45.0H83.0V46.4H81.6ZM97.0 47.8H99.8V49.2H97.0ZM80.2 49.2H83.0V50.6H80.2ZM95.6 49.2H98.4V50.6H95.6ZM81.6 50.6H83.0V52.0H81.6ZM95.6 50.6H97.0V52.0H95.6ZM57.7 52.0H60.5V53.4H57.7ZM56.2 53.4H57.7V54.8H56.2ZM60.5 53.4H61.9V54.8H60.5ZM64.7 53.4H71.7V54.8H64.7ZM90.0 53.4H97.0V54.8H90.0ZM56.2 54.8H57.7V56.2H56.2ZM60.5 54.8H61.9V56.2H60.5ZM63.3 54.8H97.0V56.2H63.3ZM57.7 56.2H60.5V57.7H57.7ZM61.9 56.2H67.5V57.7H61.9ZM68.9 56.2H92.8V57.7H68.9ZM94.2 56.2H98.4V57.7H94.2ZM59.1 57.7H66.1V59.1H59.1ZM94.2 57.7H98.4V59.1H94.2ZM57.7 59.1H64.7V60.5H57.7ZM95.6 59.1H98.4V60.5H95.6ZM57.7 60.5H61.9V61.9H57.7ZM95.6 60.5H98.4V61.9H95.6ZM57.7 61.9H60.5V63.3H57.7ZM94.2 61.9H98.4V63.3H94.2ZM57.7 63.3H60.5V64.7H57.7ZM78.8 63.3H84.4V64.7H78.8ZM94.2 63.3H98.4V64.7H94.2ZM56.2 64.7H60.5V66.1H56.2ZM78.8 64.7H84.4V66.1H78.8ZM92.8 64.7H97.0V66.1H92.8ZM56.2 66.1H60.5V67.5H56.2ZM78.8 66.1H84.4V67.5H78.8ZM92.8 66.1H97.0V67.5H92.8ZM56.2 67.5H59.1V68.9H56.2ZM78.8 67.5H84.4V68.9H78.8ZM91.4 67.5H95.6V68.9H91.4ZM104.1 67.5H111.1V68.9H104.1ZM56.2 68.9H59.1V70.3H56.2ZM91.4 68.9H95.6V70.3H91.4ZM99.8 68.9H112.5V70.3H99.8ZM56.2 70.3H59.1V71.7H56.2ZM90.0 70.3H106.9V71.7H90.0ZM108.3 70.3H113.9V71.7H108.3ZM56.2 71.7H59.1V73.1H56.2ZM90.0 71.7H102.7V73.1H90.0ZM109.7 71.7H116.7V73.1H109.7ZM56.2 73.1H59.1V74.5H56.2ZM88.6 73.1H97.0V74.5H88.6ZM111.1 73.1H118.1V74.5H111.1ZM56.2 74.5H60.5V75.9H56.2ZM88.6 74.5H95.6V75.9H88.6ZM113.9 74.5H118.1V75.9H113.9ZM56.2 75.9H60.5V77.3H56.2ZM87.2 75.9H94.2V77.3H87.2ZM115.3 75.9H119.5V77.3H115.3ZM57.7 77.3H60.5V78.8H57.7ZM90.0 77.3H92.8V78.8H90.0ZM115.3 77.3H119.5V78.8H115.3ZM57.7 78.8H60.5V80.2H57.7ZM116.7 78.8H120.9V80.2H116.7ZM57.7 80.2H60.5V81.6H57.7ZM116.7 80.2H120.9V81.6H116.7ZM56.2 81.6H60.5V83.0H56.2ZM118.1 81.6H120.9V83.0H118.1ZM56.2 83.0H60.5V84.4H56.2ZM118.1 83.0H120.9V84.4H118.1ZM56.2 84.4H59.1V85.8H56.2ZM118.1 84.4H120.9V85.8H118.1ZM56.2 85.8H59.1V87.2H56.2ZM118.1 85.8H120.9V87.2H118.1ZM56.2 87.2H60.5V88.6H56.2ZM118.1 87.2H120.9V88.6H118.1ZM56.2 88.6H59.1V90.0H56.2ZM118.1 88.6H120.9V90.0H118.1ZM56.2 90.0H59.1V91.4H56.2ZM118.1 90.0H120.9V91.4H118.1ZM56.2 91.4H59.1V92.8H56.2ZM118.1 91.4H120.9V92.8H118.1ZM56.2 92.8H59.1V94.2H56.2ZM118.1 92.8H120.9V94.2H118.1ZM56.2 94.2H60.5V95.6H56.2ZM116.7 94.2H120.9V95.6H116.7ZM56.2 95.6H60.5V97.0H56.2ZM116.7 95.6H120.9V97.0H116.7ZM57.7 97.0H60.5V98.4H57.7ZM115.3 97.0H119.5V98.4H115.3ZM57.7 98.4H60.5V99.8H57.7ZM115.3 98.4H119.5V99.8H115.3ZM57.7 99.8H61.9V101.2H57.7ZM115.3 99.8H118.1V101.2H115.3ZM57.7 101.2H63.3V102.7H57.7ZM115.3 101.2H118.1V102.7H115.3ZM59.1 102.7H64.7V104.1H59.1ZM115.3 102.7H118.1V104.1H115.3ZM60.5 104.1H66.1V105.5H60.5ZM115.3 104.1H118.1V105.5H115.3ZM61.9 105.5H68.9V106.9H61.9ZM115.3 105.5H118.1V106.9H115.3ZM63.3 106.9H71.7V108.3H63.3ZM115.3 106.9H119.5V108.3H115.3ZM56.2 108.3H57.7V109.7H56.2ZM64.7 108.3H70.3V109.7H64.7ZM113.9 108.3H118.1V109.7H113.9ZM119.5 108.3H120.9V109.7H119.5ZM54.8 109.7H56.2V111.1H54.8ZM57.7 109.7H59.1V111.1H57.7ZM63.3 109.7H68.9V111.1H63.3ZM113.9 109.7H118.1V111.1H113.9ZM119.5 109.7H120.9V111.1H119.5ZM56.2 111.1H57.7V112.5H56.2ZM60.5 111.1H67.5V112.5H60.5ZM112.5 111.1H116.7V112.5H112.5ZM60.5 112.5H66.1V113.9H60.5ZM112.5 112.5H116.7V113.9H112.5ZM60.5 113.9H64.7V115.3H60.5ZM111.1 113.9H115.3V115.3H111.1ZM59.1 115.3H64.7V116.7H59.1ZM111.1 115.3H115.3V116.7H111.1ZM59.1 116.7H63.3V118.1H59.1ZM109.7 116.7H113.9V118.1H109.7ZM59.1 118.1H61.9V119.5H59.1ZM109.7 118.1H113.9V119.5H109.7ZM59.1 119.5H61.9V120.9H59.1ZM109.7 119.5H112.5V120.9H109.7ZM57.7 120.9H61.9V122.3H57.7ZM109.7 120.9H112.5V122.3H109.7ZM57.7 122.3H61.9V123.8H57.7ZM108.3 122.3H112.5V123.8H108.3ZM57.7 123.8H60.5V125.2H57.7ZM108.3 123.8H112.5V125.2H108.3ZM57.7 125.2H60.5V126.6H57.7ZM108.3 125.2H111.1V126.6H108.3ZM57.7 126.6H60.5V128.0H57.7ZM108.3 126.6H111.1V128.0H108.3ZM57.7 128.0H60.5V129.4H57.7ZM108.3 128.0H111.1V129.4H108.3ZM57.7 129.4H60.5V130.8H57.7ZM106.9 129.4H111.1V130.8H106.9ZM57.7 130.8H61.9V132.2H57.7ZM106.9 130.8H111.1V132.2H106.9ZM57.7 132.2H61.9V133.6H57.7ZM106.9 132.2H109.7V133.6H106.9ZM59.1 133.6H63.3V135.0H59.1ZM106.9 133.6H109.7V135.0H106.9ZM59.1 135.0H63.3V136.4H59.1ZM106.9 135.0H109.7V136.4H106.9ZM60.5 136.4H64.7V137.8H60.5ZM106.9 136.4H109.7V137.8H106.9ZM60.5 137.8H64.7V139.2H60.5ZM106.9 137.8H109.7V139.2H106.9ZM61.9 139.2H66.1V140.6H61.9ZM106.9 139.2H109.7V140.6H106.9ZM61.9 140.6H67.5V142.0H61.9ZM105.5 140.6H109.7V142.0H105.5ZM63.3 142.0H68.9V143.4H63.3ZM105.5 142.0H109.7V143.4H105.5ZM64.7 143.4H68.9V144.8H64.7ZM105.5 143.4H108.3V144.8H105.5ZM66.1 144.8H70.3V146.2H66.1ZM105.5 144.8H108.3V146.2H105.5ZM66.1 146.2H71.7V147.7H66.1ZM105.5 146.2H108.3V147.7H105.5ZM67.5 147.7H73.1V149.1H67.5ZM91.4 147.7H92.8V149.1H91.4ZM104.1 147.7H108.3V149.1H104.1ZM68.9 149.1H75.9V150.5H68.9ZM90.0 149.1H92.8V150.5H90.0ZM104.1 149.1H108.3V150.5H104.1ZM70.3 150.5H77.3V151.9H70.3ZM87.2 150.5H92.8V151.9H87.2ZM102.7 150.5H106.9V151.9H102.7ZM73.1 151.9H80.2V153.3H73.1ZM87.2 151.9H94.2V153.3H87.2ZM102.7 151.9H106.9V153.3H102.7ZM74.5 153.3H81.6V154.7H74.5ZM88.6 153.3H94.2V154.7H88.6ZM101.2 153.3H105.5V154.7H101.2ZM77.3 154.7H83.0V156.1H77.3ZM88.6 154.7H90.0V156.1H88.6ZM98.4 154.7H105.5V156.1H98.4ZM78.8 156.1H84.4V157.5H78.8ZM97.0 156.1H104.1V157.5H97.0ZM80.2 157.5H84.4V158.9H80.2ZM94.2 157.5H101.2V158.9H94.2ZM81.6 158.9H85.8V160.3H81.6ZM87.2 158.9H99.8V160.3H87.2ZM81.6 160.3H97.0V161.7H81.6ZM83.0 161.7H90.0V163.1H83.0Z"/><path fill="#e53b44" d="M108.3 22.5H109.7V23.9H108.3ZM91.4 25.3H92.8V26.7H91.4ZM81.6 35.2H83.0V36.6H81.6ZM77.3 36.6H78.8V38.0H77.3ZM97.0 36.6H98.4V38.0H97.0ZM85.8 38.0H87.2V39.4H85.8ZM113.9 38.0H115.3V39.4H113.9ZM108.3 39.4H109.7V40.8H108.3Z"/><path fill="#fb922b" d="M81.6 43.6H83.0V45.0H81.6ZM67.5 56.2H68.9V57.7H67.5ZM92.8 56.2H94.2V57.7H92.8ZM66.1 57.7H94.2V59.1H66.1ZM64.7 59.1H95.6V60.5H64.7ZM61.9 60.5H95.6V61.9H61.9ZM60.5 61.9H94.2V63.3H60.5ZM60.5 63.3H78.8V64.7H60.5ZM84.4 63.3H94.2V64.7H84.4ZM60.5 64.7H70.3V66.1H60.5ZM71.7 64.7H73.1V66.1H71.7ZM91.4 64.7H92.8V66.1H91.4ZM60.5 66.1H68.9V67.5H60.5ZM59.1 67.5H70.3V68.9H59.1ZM59.1 68.9H68.9V70.3H59.1ZM59.1 70.3H68.9V71.7H59.1ZM59.1 71.7H68.9V73.1H59.1ZM105.5 71.7H106.9V73.1H105.5ZM59.1 73.1H68.9V74.5H59.1ZM109.7 73.1H111.1V74.5H109.7ZM60.5 74.5H70.3V75.9H60.5ZM109.7 74.5H112.5V75.9H109.7ZM60.5 75.9H68.9V77.3H60.5ZM108.3 75.9H115.3V77.3H108.3ZM60.5 77.3H68.9V78.8H60.5ZM109.7 77.3H111.1V78.8H109.7ZM112.5 77.3H115.3V78.8H112.5ZM67.5 78.8H68.9V80.2H67.5ZM112.5 78.8H116.7V80.2H112.5ZM112.5 80.2H116.7V81.6H112.5ZM112.5 81.6H118.1V83.0H112.5ZM112.5 83.0H118.1V84.4H112.5ZM112.5 84.4H118.1V85.8H112.5ZM112.5 85.8H118.1V87.2H112.5ZM112.5 87.2H118.1V88.6H112.5ZM59.1 88.6H60.5V90.0H59.1ZM112.5 88.6H118.1V90.0H112.5ZM112.5 90.0H118.1V91.4H112.5ZM112.5 91.4H118.1V92.8H112.5ZM113.9 92.8H115.3V94.2H113.9ZM116.7 92.8H118.1V94.2H116.7ZM118.1 108.3H119.5V109.7H118.1ZM56.2 109.7H57.7V111.1H56.2Z"/><path fill="#e4a672" d="M80.2 50.6H81.6V52.0H80.2ZM74.5 64.7H75.9V66.1H74.5ZM84.4 64.7H91.4V66.1H84.4ZM70.3 66.1H71.7V67.5H70.3ZM84.4 66.1H85.8V67.5H84.4ZM88.6 66.1H92.8V67.5H88.6ZM88.6 67.5H91.4V68.9H88.6ZM87.2 68.9H91.4V70.3H87.2ZM87.2 70.3H90.0V71.7H87.2ZM106.9 70.3H108.3V71.7H106.9ZM85.8 71.7H90.0V73.1H85.8ZM102.7 71.7H105.5V73.1H102.7ZM106.9 71.7H109.7V73.1H106.9ZM70.3 73.1H73.1V74.5H70.3ZM74.5 73.1H75.9V74.5H74.5ZM81.6 73.1H88.6V74.5H81.6ZM97.0 73.1H109.7V74.5H97.0ZM70.3 74.5H75.9V75.9H70.3ZM77.3 74.5H88.6V75.9H77.3ZM95.6 74.5H109.7V75.9H95.6ZM112.5 74.5H113.9V75.9H112.5ZM68.9 75.9H87.2V77.3H68.9ZM94.2 75.9H108.3V77.3H94.2ZM68.9 77.3H90.0V78.8H68.9ZM92.8 77.3H109.7V78.8H92.8ZM111.1 77.3H112.5V78.8H111.1ZM60.5 78.8H67.5V80.2H60.5ZM68.9 78.8H73.1V80.2H68.9ZM74.5 78.8H78.8V80.2H74.5ZM80.2 78.8H112.5V80.2H80.2ZM60.5 80.2H75.9V81.6H60.5ZM77.3 80.2H78.8V81.6H77.3ZM83.0 80.2H112.5V81.6H83.0ZM60.5 81.6H67.5V83.0H60.5ZM70.3 81.6H71.7V83.0H70.3ZM87.2 81.6H106.9V83.0H87.2ZM109.7 81.6H112.5V83.0H109.7ZM60.5 83.0H63.3V84.4H60.5ZM88.6 83.0H99.8V84.4H88.6ZM101.2 83.0H102.7V84.4H101.2ZM106.9 83.0H112.5V84.4H106.9ZM59.1 84.4H63.3V85.8H59.1ZM91.4 84.4H98.4V85.8H91.4ZM101.2 84.4H102.7V85.8H101.2ZM109.7 84.4H112.5V85.8H109.7ZM59.1 85.8H63.3V87.2H59.1ZM111.1 85.8H112.5V87.2H111.1ZM60.5 87.2H63.3V88.6H60.5ZM111.1 87.2H112.5V88.6H111.1ZM60.5 88.6H63.3V90.0H60.5ZM59.1 90.0H64.7V91.4H59.1ZM111.1 90.0H112.5V91.4H111.1ZM59.1 91.4H63.3V92.8H59.1ZM84.4 91.4H85.8V92.8H84.4ZM59.1 92.8H63.3V94.2H59.1ZM81.6 92.8H85.8V94.2H81.6ZM111.1 92.8H113.9V94.2H111.1ZM115.3 92.8H116.7V94.2H115.3ZM60.5 94.2H64.7V95.6H60.5ZM78.8 94.2H85.8V95.6H78.8ZM109.7 94.2H116.7V95.6H109.7ZM60.5 95.6H64.7V97.0H60.5ZM78.8 95.6H84.4V97.0H78.8ZM111.1 95.6H116.7V97.0H111.1ZM60.5 97.0H66.1V98.4H60.5ZM80.2 97.0H88.6V98.4H80.2ZM108.3 97.0H115.3V98.4H108.3ZM60.5 98.4H66.1V99.8H60.5ZM80.2 98.4H87.2V99.8H80.2ZM106.9 98.4H115.3V99.8H106.9ZM61.9 99.8H67.5V101.2H61.9ZM80.2 99.8H87.2V101.2H80.2ZM104.1 99.8H115.3V101.2H104.1ZM63.3 101.2H66.1V102.7H63.3ZM80.2 101.2H84.4V102.7H80.2ZM85.8 101.2H87.2V102.7H85.8ZM99.8 101.2H102.7V102.7H99.8ZM104.1 101.2H115.3V102.7H104.1ZM64.7 102.7H68.9V104.1H64.7ZM97.0 102.7H115.3V104.1H97.0ZM66.1 104.1H71.7V105.5H66.1ZM92.8 104.1H115.3V105.5H92.8ZM68.9 105.5H70.3V106.9H68.9ZM71.7 105.5H73.1V106.9H71.7ZM92.8 105.5H115.3V106.9H92.8ZM71.7 106.9H73.1V108.3H71.7ZM92.8 106.9H115.3V108.3H92.8ZM70.3 108.3H73.1V109.7H70.3ZM91.4 108.3H113.9V109.7H91.4ZM68.9 109.7H73.1V111.1H68.9ZM91.4 109.7H113.9V111.1H91.4ZM67.5 111.1H73.1V112.5H67.5ZM91.4 111.1H112.5V112.5H91.4ZM66.1 112.5H73.1V113.9H66.1ZM90.0 112.5H112.5V113.9H90.0ZM64.7 113.9H70.3V115.3H64.7ZM88.6 113.9H111.1V115.3H88.6ZM64.7 115.3H71.7V116.7H64.7ZM90.0 115.3H111.1V116.7H90.0ZM63.3 116.7H71.7V118.1H63.3ZM92.8 116.7H109.7V118.1H92.8ZM61.9 118.1H63.3V119.5H61.9ZM67.5 118.1H68.9V119.5H67.5ZM94.2 118.1H109.7V119.5H94.2ZM61.9 119.5H63.3V120.9H61.9ZM99.8 119.5H109.7V120.9H99.8ZM61.9 120.9H63.3V122.3H61.9ZM98.4 120.9H109.7V122.3H98.4ZM61.9 122.3H63.3V123.8H61.9ZM101.2 122.3H108.3V123.8H101.2ZM60.5 123.8H63.3V125.2H60.5ZM101.2 123.8H108.3V125.2H101.2ZM60.5 125.2H64.7V126.6H60.5ZM104.1 125.2H108.3V126.6H104.1ZM60.5 126.6H64.7V128.0H60.5ZM102.7 126.6H108.3V128.0H102.7ZM60.5 128.0H64.7V129.4H60.5ZM105.5 128.0H108.3V129.4H105.5ZM60.5 129.4H63.3V130.8H60.5ZM105.5 129.4H106.9V130.8H105.5ZM61.9 130.8H63.3V132.2H61.9ZM63.3 132.2H64.7V133.6H63.3ZM63.3 133.6H64.7V135.0H63.3ZM63.3 135.0H64.7V136.4H63.3ZM105.5 135.0H106.9V136.4H105.5ZM66.1 136.4H67.5V137.8H66.1ZM64.7 137.8H67.5V139.2H64.7ZM105.5 137.8H106.9V139.2H105.5ZM66.1 139.2H67.5V140.6H66.1ZM105.5 139.2H106.9V140.6H105.5ZM68.9 143.4H71.7V144.8H68.9ZM70.3 144.8H73.1V146.2H70.3ZM71.7 146.2H73.1V147.7H71.7ZM102.7 149.1H104.1V150.5H102.7ZM99.8 151.9H102.7V153.3H99.8ZM81.6 153.3H83.0V154.7H81.6ZM99.8 153.3H101.2V154.7H99.8ZM95.6 156.1H97.0V157.5H95.6ZM84.4 157.5H85.8V158.9H84.4ZM91.4 157.5H94.2V158.9H91.4ZM85.8 158.9H87.2V160.3H85.8Z"/><path fill="#b86f50" d="M57.7 53.4H60.5V54.8H57.7ZM57.7 54.8H60.5V56.2H57.7ZM70.3 64.7H71.7V66.1H70.3ZM73.1 64.7H74.5V66.1H73.1ZM75.9 64.7H78.8V66.1H75.9ZM68.9 66.1H70.3V67.5H68.9ZM71.7 66.1H78.8V67.5H71.7ZM85.8 66.1H88.6V67.5H85.8ZM70.3 67.5H78.8V68.9H70.3ZM84.4 67.5H88.6V68.9H84.4ZM68.9 68.9H87.2V70.3H68.9ZM68.9 70.3H87.2V71.7H68.9ZM68.9 71.7H85.8V73.1H68.9ZM68.9 73.1H70.3V74.5H68.9ZM73.1 73.1H74.5V74.5H73.1ZM75.9 73.1H81.6V74.5H75.9ZM75.9 74.5H77.3V75.9H75.9Z"/><path fill="#ffe762" d="M73.1 78.8H74.5V80.2H73.1ZM78.8 78.8H80.2V80.2H78.8ZM75.9 80.2H77.3V81.6H75.9ZM78.8 80.2H83.0V81.6H78.8ZM67.5 81.6H70.3V83.0H67.5ZM71.7 81.6H75.9V83.0H71.7ZM77.3 81.6H87.2V83.0H77.3ZM106.9 81.6H109.7V83.0H106.9ZM63.3 83.0H73.1V84.4H63.3ZM78.8 83.0H88.6V84.4H78.8ZM99.8 83.0H101.2V84.4H99.8ZM102.7 83.0H106.9V84.4H102.7ZM63.3 84.4H68.9V85.8H63.3ZM70.3 84.4H73.1V85.8H70.3ZM78.8 84.4H91.4V85.8H78.8ZM98.4 84.4H101.2V85.8H98.4ZM102.7 84.4H109.7V85.8H102.7ZM63.3 85.8H67.5V87.2H63.3ZM78.8 85.8H111.1V87.2H78.8ZM63.3 87.2H67.5V88.6H63.3ZM80.2 87.2H91.4V88.6H80.2ZM92.8 87.2H111.1V88.6H92.8ZM63.3 88.6H67.5V90.0H63.3ZM80.2 88.6H90.0V90.0H80.2ZM98.4 88.6H112.5V90.0H98.4ZM64.7 90.0H67.5V91.4H64.7ZM80.2 90.0H90.0V91.4H80.2ZM99.8 90.0H111.1V91.4H99.8ZM63.3 91.4H68.9V92.8H63.3ZM81.6 91.4H84.4V92.8H81.6ZM85.8 91.4H90.0V92.8H85.8ZM101.2 91.4H112.5V92.8H101.2ZM63.3 92.8H68.9V94.2H63.3ZM85.8 92.8H91.4V94.2H85.8ZM102.7 92.8H111.1V94.2H102.7ZM64.7 94.2H68.9V95.6H64.7ZM85.8 94.2H91.4V95.6H85.8ZM102.7 94.2H109.7V95.6H102.7ZM64.7 95.6H68.9V97.0H64.7ZM70.3 95.6H71.7V97.0H70.3ZM75.9 95.6H78.8V97.0H75.9ZM84.4 95.6H91.4V97.0H84.4ZM104.1 95.6H111.1V97.0H104.1ZM66.1 97.0H68.9V98.4H66.1ZM70.3 97.0H80.2V98.4H70.3ZM88.6 97.0H92.8V98.4H88.6ZM94.2 97.0H95.6V98.4H94.2ZM104.1 97.0H108.3V98.4H104.1ZM66.1 98.4H80.2V99.8H66.1ZM87.2 98.4H92.8V99.8H87.2ZM94.2 98.4H97.0V99.8H94.2ZM101.2 98.4H102.7V99.8H101.2ZM104.1 98.4H106.9V99.8H104.1ZM67.5 99.8H80.2V101.2H67.5ZM87.2 99.8H95.6V101.2H87.2ZM97.0 99.8H104.1V101.2H97.0ZM66.1 101.2H80.2V102.7H66.1ZM84.4 101.2H85.8V102.7H84.4ZM87.2 101.2H98.4V102.7H87.2ZM102.7 101.2H104.1V102.7H102.7ZM68.9 102.7H97.0V104.1H68.9ZM71.7 104.1H92.8V105.5H71.7ZM70.3 105.5H71.7V106.9H70.3ZM73.1 105.5H92.8V106.9H73.1ZM73.1 106.9H92.8V108.3H73.1ZM73.1 108.3H91.4V109.7H73.1ZM73.1 109.7H91.4V111.1H73.1ZM73.1 111.1H91.4V112.5H73.1ZM73.1 112.5H90.0V113.9H73.1ZM70.3 113.9H88.6V115.3H70.3ZM71.7 115.3H90.0V116.7H71.7ZM71.7 116.7H92.8V118.1H71.7ZM63.3 118.1H67.5V119.5H63.3ZM68.9 118.1H94.2V119.5H68.9ZM63.3 119.5H80.2V120.9H63.3ZM81.6 119.5H87.2V120.9H81.6ZM88.6 119.5H91.4V120.9H88.6ZM92.8 119.5H99.8V120.9H92.8ZM63.3 120.9H80.2V122.3H63.3ZM94.2 120.9H98.4V122.3H94.2ZM63.3 122.3H71.7V123.8H63.3ZM99.8 122.3H101.2V123.8H99.8ZM63.3 123.8H71.7V125.2H63.3ZM73.1 123.8H74.5V125.2H73.1ZM64.7 125.2H68.9V126.6H64.7ZM64.7 126.6H68.9V128.0H64.7ZM64.7 128.0H67.5V129.4H64.7Z"/><path fill="#ffffff" d="M75.9 81.6H77.3V83.0H75.9ZM73.1 83.0H78.8V84.4H73.1ZM68.9 84.4H70.3V85.8H68.9ZM73.1 84.4H78.8V85.8H73.1ZM67.5 85.8H78.8V87.2H67.5ZM67.5 87.2H80.2V88.6H67.5ZM91.4 87.2H92.8V88.6H91.4ZM67.5 88.6H80.2V90.0H67.5ZM90.0 88.6H98.4V90.0H90.0ZM67.5 90.0H80.2V91.4H67.5ZM90.0 90.0H99.8V91.4H90.0ZM68.9 91.4H81.6V92.8H68.9ZM90.0 91.4H101.2V92.8H90.0ZM68.9 92.8H81.6V94.2H68.9ZM91.4 92.8H102.7V94.2H91.4ZM68.9 94.2H78.8V95.6H68.9ZM91.4 94.2H102.7V95.6H91.4ZM68.9 95.6H70.3V97.0H68.9ZM71.7 95.6H75.9V97.0H71.7ZM91.4 95.6H104.1V97.0H91.4ZM68.9 97.0H70.3V98.4H68.9ZM92.8 97.0H94.2V98.4H92.8ZM95.6 97.0H104.1V98.4H95.6ZM92.8 98.4H94.2V99.8H92.8ZM97.0 98.4H101.2V99.8H97.0ZM102.7 98.4H104.1V99.8H102.7ZM95.6 99.8H97.0V101.2H95.6ZM98.4 101.2H99.8V102.7H98.4ZM80.2 119.5H81.6V120.9H80.2ZM87.2 119.5H88.6V120.9H87.2ZM91.4 119.5H92.8V120.9H91.4ZM80.2 120.9H94.2V122.3H80.2ZM71.7 122.3H99.8V123.8H71.7ZM71.7 123.8H73.1V125.2H71.7ZM74.5 123.8H101.2V125.2H74.5ZM68.9 125.2H104.1V126.6H68.9ZM68.9 126.6H102.7V128.0H68.9ZM67.5 128.0H105.5V129.4H67.5ZM67.5 129.4H105.5V130.8H67.5ZM67.5 130.8H106.9V132.2H67.5ZM67.5 132.2H106.9V133.6H67.5ZM67.5 133.6H94.2V135.0H67.5ZM99.8 133.6H106.9V135.0H99.8ZM68.9 135.0H94.2V136.4H68.9ZM99.8 135.0H105.5V136.4H99.8ZM67.5 136.4H92.8V137.8H67.5ZM99.8 136.4H106.9V137.8H99.8ZM68.9 137.8H92.8V139.2H68.9ZM97.0 137.8H98.4V139.2H97.0ZM99.8 137.8H105.5V139.2H99.8ZM67.5 139.2H105.5V140.6H67.5ZM67.5 140.6H105.5V142.0H67.5ZM68.9 142.0H105.5V143.4H68.9ZM71.7 143.4H105.5V144.8H71.7ZM73.1 144.8H105.5V146.2H73.1ZM73.1 146.2H105.5V147.7H73.1ZM73.1 147.7H91.4V149.1H73.1ZM92.8 147.7H104.1V149.1H92.8ZM75.9 149.1H90.0V150.5H75.9ZM92.8 149.1H102.7V150.5H92.8ZM77.3 150.5H87.2V151.9H77.3ZM92.8 150.5H102.7V151.9H92.8ZM80.2 151.9H87.2V153.3H80.2ZM94.2 151.9H99.8V153.3H94.2ZM83.0 153.3H88.6V154.7H83.0ZM94.2 153.3H99.8V154.7H94.2ZM83.0 154.7H88.6V156.1H83.0ZM90.0 154.7H98.4V156.1H90.0ZM84.4 156.1H95.6V157.5H84.4ZM85.8 157.5H91.4V158.9H85.8Z"/><path fill="#afbfd2" d="M63.3 129.4H67.5V130.8H63.3ZM63.3 130.8H67.5V132.2H63.3ZM61.9 132.2H63.3V133.6H61.9ZM64.7 132.2H67.5V133.6H64.7ZM64.7 133.6H67.5V135.0H64.7ZM94.2 133.6H99.8V135.0H94.2ZM64.7 135.0H68.9V136.4H64.7ZM94.2 135.0H99.8V136.4H94.2ZM64.7 136.4H66.1V137.8H64.7ZM92.8 136.4H99.8V137.8H92.8ZM67.5 137.8H68.9V139.2H67.5ZM92.8 137.8H97.0V139.2H92.8ZM98.4 137.8H99.8V139.2H98.4Z"/></svg></div><span class="t" style="top:375.3px;left:959px;">Resolution</span><span class="t" style="top:396.37px;left:959px;">Capture rate</span><span class="t" style="top:417.44px;left:959px;">Duration</span><span class="t" style="top:438.51px;left:959px;">Delay</span><span class="t" style="top:459.58000000000004px;left:959px;">Seed</span><span class="t" style="top:480.65px;left:959px;">Loop</span><span class="t" style="top:501.72px;left:959px;">Seamless</span><span class="t" style="top:522.79px;left:959px;">Background</span><span class="t" style="top:543.86px;left:959px;">Image effects</span><div style="left:1037.5px;top:373.7px;width:86px;height:17px;background:#131313;box-shadow:inset 0 0 0 1px #252525;"></div><span class="t" style="top:375.3px;left:930.8px;width:300px;text-align:center;letter-spacing:-.25px;">128 px</span><div style="left:1127.5px;top:373.7px;width:87.5px;height:17px;background:#131313;box-shadow:inset 0 0 0 1px #252525;"></div><span class="t" style="top:375.3px;left:1021.5px;width:300px;text-align:center;letter-spacing:-.25px;">128 px</span><div style="left:1219.5px;top:373.7px;width:22px;height:17px;background:#131313;box-shadow:inset 0 0 0 1px #252525;"></div><svg style="left:1224.5px;top:377.2px" width="12" height="9" viewBox="0 0 12 9"><path d="M.7 2.8V1.7a1 1 0 0 1 1-1H3M9 .7h1.3a1 1 0 0 1 1 1V2.8M11.3 6.2V7.3a1 1 0 0 1-1 1H9M3 8.3H1.7a1 1 0 0 1-1-1V6.2" fill="none" stroke="#e6e6e6" stroke-width="1.3"/><rect x="3" y="2.6" width="6" height="3.8" rx=".5" fill="#e6e6e6"/></svg><div style="left:1037.5px;top:394.77px;width:204px;height:17px;background:#131313;box-shadow:inset 0 0 0 1px #252525;"></div><span class="t" style="top:396.37px;left:989px;width:300px;text-align:center;letter-spacing:-.2px;">30 fps</span><div style="left:1037.5px;top:415.84px;width:204px;height:17px;background:#131313;box-shadow:inset 0 0 0 1px #252525;"></div><span class="t" style="top:417.44px;left:989px;width:300px;text-align:center;letter-spacing:-.2px;">2.50 s</span><div style="left:1037.5px;top:436.90999999999997px;width:204px;height:17px;background:#131313;box-shadow:inset 0 0 0 1px #252525;"></div><span class="t" style="top:438.51px;left:989px;width:300px;text-align:center;letter-spacing:-.2px;">2.50 s</span><div style="left:1037.5px;top:457.98px;width:177.5px;height:17px;background:#131313;box-shadow:inset 0 0 0 1px #252525;"></div><span class="t" style="top:459.58000000000004px;left:976px;width:300px;text-align:center;">0</span><div style="left:1219.5px;top:457.98px;width:22px;height:17px;background:#131313;box-shadow:inset 0 0 0 1px #252525;"></div><svg style="left:1224.5px;top:460.48px" width="12" height="12" viewBox="0 0 12 12"><rect x="4.500" y=".8" width="6.700" height="6.700" rx="1" fill="#e6e6e6"/><rect x=".8" y="4.500" width="6.700" height="6.700" rx="1" fill="#e6e6e6" stroke="#131313" stroke-width=".8"/><g fill="#131313"><circle cx="2.800" cy="6.500" r=".7"/><circle cx="5.500" cy="9.200" r=".7"/><circle cx="7" cy="2.800" r=".6"/><circle cx="9.300" cy="5" r=".6"/></g></svg><div style="left:1037.5px;top:479.04999999999995px;width:17px;height:17px;background:#131313;box-shadow:inset 0 0 0 1px #252525;"></div><div style="left:1037.5px;top:500.12px;width:17px;height:17px;background:#131313;box-shadow:inset 0 0 0 1px #252525;"></div><div style="left:1037.5px;top:521.19px;width:17px;height:17px;background:#131313;box-shadow:inset 0 0 0 1px #252525;"></div><div style="left:1037.5px;top:542.26px;width:17px;height:17px;background:#131313;box-shadow:inset 0 0 0 1px #252525;"></div><svg style="left:1039px;top:544.76px" width="14" height="12" viewBox="0 0 14 12"><path d="M1.500 6.500L5 10 12.500 2" fill="none" stroke="#3d9ee5" stroke-width="2.200"/></svg><div style="left:770.8px;top:558.7px;width:60.7px;height:17.2px;background:#131313;box-shadow:inset 0 0 0 1px #252525;"></div><svg style="left:778px;top:562.8px" width="9.6" height="6.4" viewBox="0 0 11 7"><rect x="0" y="0" width="7.400" height="7" rx="1" fill="#e6e6e6"/><path d="M7.400 2.300L11 0V7L7.400 4.700Z" fill="#e6e6e6"/></svg><span class="t" style="top:560.6px;left:793px;">Preview</span><div style="left:839.4px;top:558.7px;width:17.2px;height:17.2px;background:#131313;box-shadow:inset 0 0 0 1px #252525;"></div><svg style="left:848.7px;top:563.2px" width="5" height="6" viewBox="0 0 5 6"><path d="M4.200 .5V5.500L.8 3Z" fill="#e6e6e6"/></svg><div style="left:860.6px;top:558.7px;width:22.6px;height:17.2px;background:#131313;box-shadow:inset 0 0 0 1px #252525;"></div><svg style="left:868.4px;top:561.7px" width="8" height="9" viewBox="0 0 8 9"><path d="M.8 .5L7.200 4.500.8 8.500Z" fill="#e6e6e6"/></svg><div style="left:887.4px;top:558.7px;width:16.8px;height:17.2px;background:#131313;box-shadow:inset 0 0 0 1px #252525;"></div><svg style="left:896.8px;top:563.2px" width="5" height="6" viewBox="0 0 5 6"><path d="M.8 .5V5.500L4.200 3Z" fill="#e6e6e6"/></svg><span class="t" style="top:560.6px;left:912.8px;">65/75</span><div style="left:771px;top:582px;width:471px;height:1px;background:#272727;"></div><span class="t" style="top:592.0px;left:770.5px;">Type</span><span class="t" style="top:613.1px;left:770.5px;">File format</span><span class="t" style="top:634.2px;left:770.5px;">Texture origin</span><span class="t" style="top:655.3px;left:770.5px;">File path</span><div style="left:873.5px;top:590.0px;width:368.2px;height:17.4px;background:#131313;box-shadow:inset 0 0 0 1px #252525;"></div><svg style="left:1228.5px;top:594.5px" width="10" height="10" viewBox="0 0 10 10"><path d="M.3 .8H9.7L5 8.6Z" fill="#e6e6e6"/></svg><div style="left:873.5px;top:611.1px;width:368.2px;height:17.4px;background:#131313;box-shadow:inset 0 0 0 1px #252525;"></div><svg style="left:1228.5px;top:615.6px" width="10" height="10" viewBox="0 0 10 10"><path d="M.3 .8H9.7L5 8.6Z" fill="#e6e6e6"/></svg><div style="left:873.5px;top:632.2px;width:368.2px;height:17.4px;background:#131313;box-shadow:inset 0 0 0 1px #252525;"></div><svg style="left:1228.5px;top:636.7px" width="10" height="10" viewBox="0 0 10 10"><path d="M.3 .8H9.7L5 8.6Z" fill="#e6e6e6"/></svg><svg style="left:880.5px;top:593px" width="9" height="11" viewBox="0 0 9 11"><rect x=".5" y=".5" width="8" height="10" rx="1.200" fill="#e6e6e6"/><circle cx="4.500" cy="3.800" r="1.400" fill="#131313"/><path d="M2 8.600C2 6.800 3.200 6.200 4.500 6.200S7 6.800 7 8.600Z" fill="#131313"/></svg><span class="t" style="top:592px;left:897.4px;">Sprite sheet</span><span class="t" style="top:613.1px;left:877.6px;">PNG</span><span class="t" style="top:634.2px;left:877.6px;">Top left</span><div style="left:873.5px;top:653.3px;width:350.2px;height:17.4px;background:#131313;box-shadow:inset 0 0 0 1px #252525;"></div><span class="t" style="top:655.3px;left:877.6px;">C:/Users/moell/result.png</span><div style="left:1225.4px;top:653.3px;width:16.3px;height:17.4px;background:#131313;box-shadow:inset 0 0 0 1px #252525;"></div><span class="t" style="top:655.5px;left:1083.5px;width:300px;text-align:center;">...</span><div style="left:770.8px;top:679px;width:56.7px;height:17px;background:#131313;box-shadow:inset 0 0 0 1px #252525;"></div><svg style="left:778px;top:683.2px" width="9.6" height="6.4" viewBox="0 0 11 7"><rect x="0" y="0" width="7.400" height="7" rx="1" fill="#e6e6e6"/><path d="M7.400 2.300L11 0V7L7.400 4.700Z" fill="#e6e6e6"/></svg><span class="t" style="top:680.9px;left:793px;">Render</span><span class="t" style="top:680.7px;left:843px;color:#858585;-webkit-text-stroke:0;letter-spacing:-.25px;">Image size: 1152 x 1152</span><div style="left:771.5px;top:703.2px;width:443.5px;height:15.6px;background:#131313;box-shadow:inset 0 0 0 1px #252525;"></div><div style="left:1219.5px;top:703.2px;width:22.2px;height:15.6px;background:#131313;box-shadow:inset 0 0 0 1px #252525;"></div><svg style="left:1226.5px;top:707px" width="8" height="8" viewBox="0 0 8 8"><path d="M1 1L7 7M7 1L1 7" stroke="#e6e6e6" stroke-width="1.9" fill="none"/></svg><svg style="left:1236px;top:717px;" width="11" height="11" viewBox="0 0 11 11"><path d="M11 0V8a3 3 0 0 1-3 3H0Z" fill="#2e2e2e"/></svg>
</div></body></html>
